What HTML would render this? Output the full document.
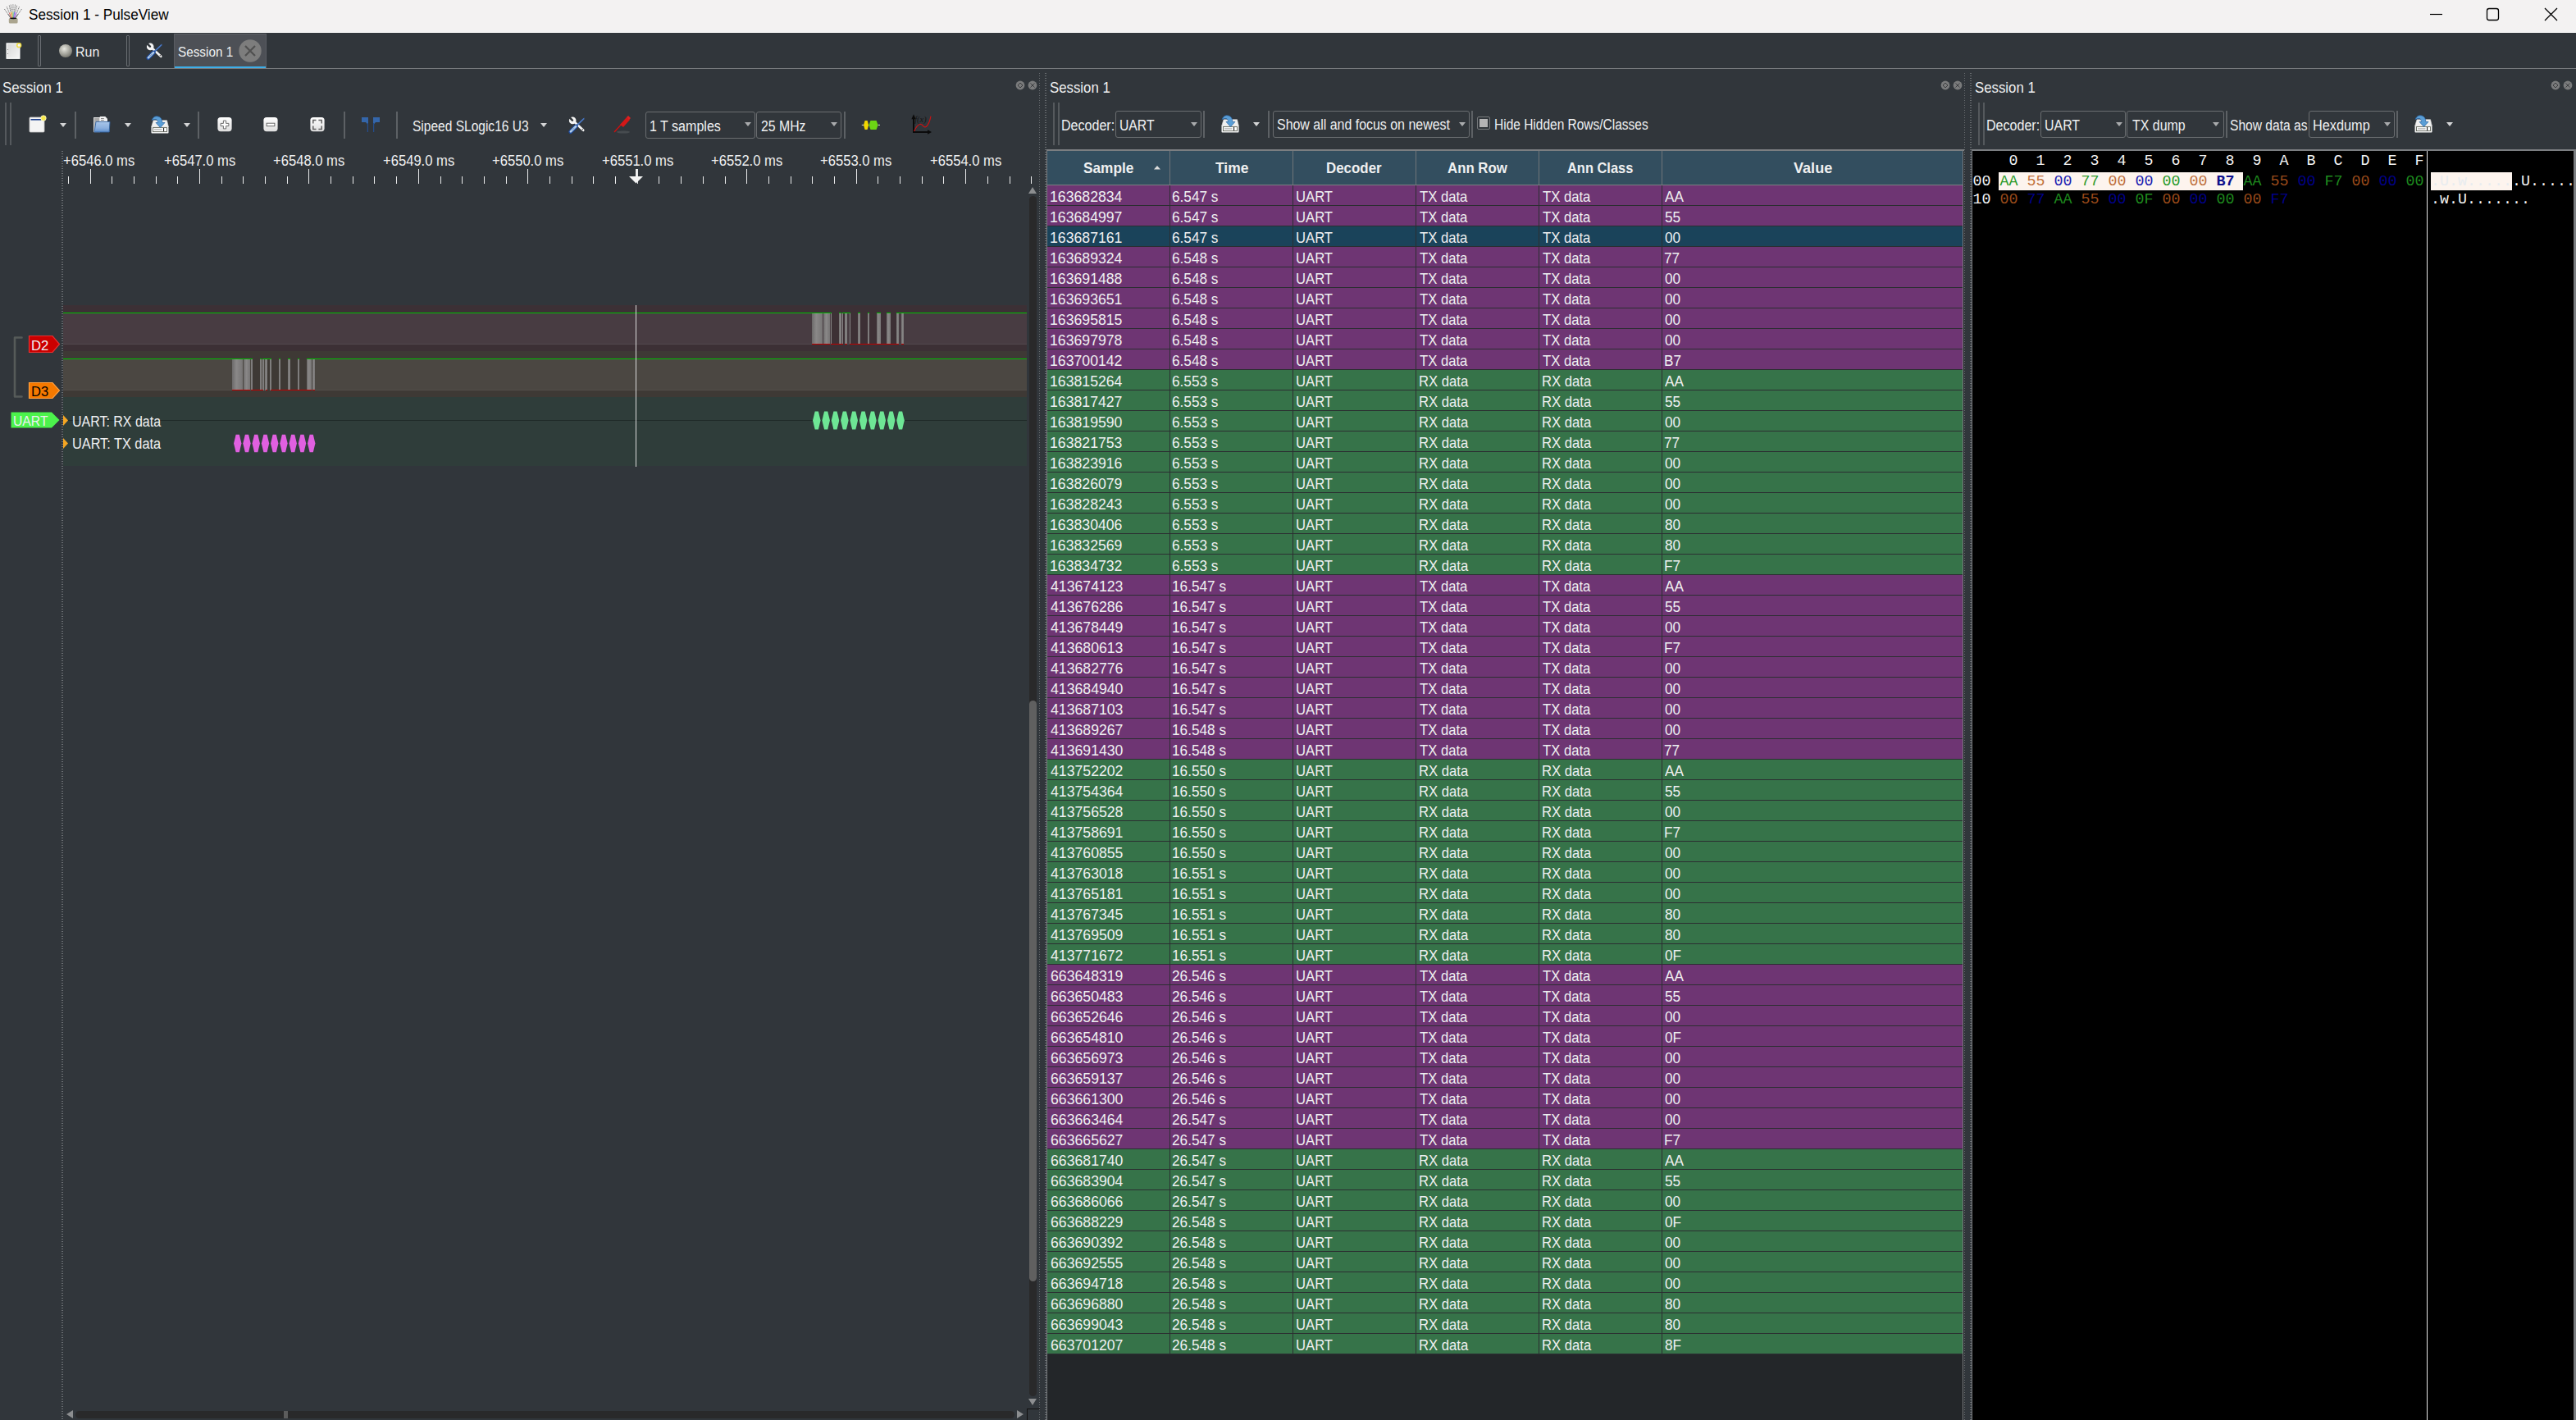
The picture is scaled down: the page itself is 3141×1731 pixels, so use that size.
<!DOCTYPE html>
<html><head><meta charset="utf-8"><style>
html,body{margin:0;padding:0;width:3141px;height:1731px;overflow:hidden;background:#31363b}
.b{position:absolute;box-sizing:content-box}
svg.b{overflow:visible}
.t{position:absolute;white-space:pre;line-height:1;transform-origin:0 0;font-family:"Liberation Sans",sans-serif}
</style></head><body>
<div class="b" style="left:0px;top:0px;width:3141px;height:40px;background:#f3f2f2;"></div>
<div class="b" style="left:0px;top:39px;width:3141px;height:1px;background:#fbfbfb;"></div>
<svg class="b" style="left:0px;top:0px;" width="32" height="32" viewBox="0 0 32 32"><line x1="5.4" y1="11" x2="9.69" y2="17.05" stroke="#6a6a6a" stroke-width="0.9" stroke-dasharray="1.2 0.6"/><line x1="9.69" y1="17.05" x2="13.20" y2="22" stroke="#555" stroke-width="1"/><line x1="8.2" y1="8.2" x2="11.33" y2="15.79" stroke="#6a6a6a" stroke-width="0.9" stroke-dasharray="1.2 0.6"/><line x1="11.33" y1="15.79" x2="13.90" y2="22" stroke="#d86060" stroke-width="1"/><line x1="11.3" y1="6.5" x2="13.12" y2="15.02" stroke="#6a6a6a" stroke-width="0.9" stroke-dasharray="1.2 0.6"/><line x1="13.12" y1="15.02" x2="14.60" y2="22" stroke="#e88040" stroke-width="1"/><line x1="13.2" y1="5.6" x2="14.35" y2="14.62" stroke="#6a6a6a" stroke-width="0.9" stroke-dasharray="1.2 0.6"/><line x1="14.35" y1="14.62" x2="15.30" y2="22" stroke="#e8d070" stroke-width="1"/><line x1="15.9" y1="5.4" x2="15.96" y2="14.53" stroke="#6a6a6a" stroke-width="0.9" stroke-dasharray="1.2 0.6"/><line x1="15.96" y1="14.53" x2="16.00" y2="22" stroke="#60b040" stroke-width="1"/><line x1="18.5" y1="5.6" x2="17.51" y2="14.62" stroke="#6a6a6a" stroke-width="0.9" stroke-dasharray="1.2 0.6"/><line x1="17.51" y1="14.62" x2="16.70" y2="22" stroke="#5080e0" stroke-width="1"/><line x1="20.6" y1="6.8" x2="18.84" y2="15.16" stroke="#6a6a6a" stroke-width="0.9" stroke-dasharray="1.2 0.6"/><line x1="18.84" y1="15.16" x2="17.40" y2="22" stroke="#c050e0" stroke-width="1"/><line x1="23.5" y1="8.2" x2="20.53" y2="15.79" stroke="#6a6a6a" stroke-width="0.9" stroke-dasharray="1.2 0.6"/><line x1="20.53" y1="15.79" x2="18.10" y2="22" stroke="#9090c0" stroke-width="1"/><line x1="26.5" y1="11" x2="22.26" y2="17.05" stroke="#6a6a6a" stroke-width="0.9" stroke-dasharray="1.2 0.6"/><line x1="22.26" y1="17.05" x2="18.80" y2="22" stroke="#555" stroke-width="1"/><rect x="10.8" y="22" width="10.8" height="6.6" rx="1.6" fill="#aba58f"/><ellipse cx="16.2" cy="22.3" rx="4" ry="0.9" fill="#111"/></svg>
<div class="t" style="left:35.33px;top:9.20px;font-size:18.90px;font-family:'Liberation Sans',sans-serif;color:#000000;transform:scaleX(0.9095);">Session 1 - PulseView</div>
<svg class="b" style="left:2955px;top:8px;" width="32" height="20" viewBox="0 0 32 20"><line x1="8" y1="9.5" x2="23" y2="9.5" stroke="#000" stroke-width="1.2"/></svg>
<svg class="b" style="left:3026px;top:4px;" width="28" height="28" viewBox="0 0 28 28"><rect x="6.5" y="6.5" width="14" height="14" rx="2.5" fill="none" stroke="#000" stroke-width="1.3"/></svg>
<svg class="b" style="left:3097px;top:4px;" width="28" height="28" viewBox="0 0 28 28"><path d="M6 6 L21 21 M21 6 L6 21" stroke="#000" stroke-width="1.3"/></svg>
<div class="b" style="left:0px;top:40px;width:3141px;height:1691px;background:#31363b;"></div>
<div class="b" style="left:0px;top:83px;width:3141px;height:1px;background:#76797c;"></div>
<svg class="b" style="left:6px;top:51px;" width="24" height="24" viewBox="0 0 24 24"><defs><linearGradient id="pg" x1="0" y1="0" x2="1" y2="1"><stop offset="0" stop-color="#d8d8d8"/><stop offset="1" stop-color="#f4f4f4"/></linearGradient></defs><rect x="1.5" y="1.3" width="17" height="19.6" fill="#fdfdfd"/><rect x="2.9" y="2.6" width="14.3" height="17" fill="url(#pg)"/><circle cx="3.5" cy="9.5" r="0.6" fill="#777"/><circle cx="3.5" cy="14.5" r="0.6" fill="#777"/><circle cx="17.2" cy="4.2" r="2.4" fill="#f6f4ff" stroke="#eedc40" stroke-width="1.5"/></svg>
<div class="b" style="left:46px;top:43px;width:2px;height:36px;border:1px solid #6a6e72;border-radius:1px"></div>
<svg class="b" style="left:71px;top:53px;" width="18" height="18" viewBox="0 0 18 18"><defs><radialGradient id="rg" cx="40%" cy="35%" r="65%"><stop offset="0" stop-color="#e8e8e0"/><stop offset="1" stop-color="#7c7c74"/></radialGradient></defs><circle cx="9" cy="9" r="8" fill="url(#rg)"/></svg>
<div class="t" style="left:92.22px;top:55.40px;font-size:16.30px;font-family:'Liberation Sans',sans-serif;color:#eff0f1;transform:scaleX(0.9801);">Run</div>
<div class="b" style="left:154px;top:43px;width:2px;height:36px;border:1px solid #6a6e72;border-radius:1px"></div>
<svg class="b" style="left:172px;top:46px;" width="30" height="30" viewBox="0 0 30 30"><path d="M13.5 12.8 L24.2 22.8" stroke="#f4f4f4" stroke-width="2.7" stroke-linecap="round"/><circle cx="11.2" cy="10.9" r="4.3" fill="#f4f4f4"/><path d="M10.9 10.6 L7.2 6.9" stroke="#31363b" stroke-width="2.6" stroke-linecap="round"/><circle cx="23.3" cy="21.8" r="0.7" fill="#444"/><path d="M25.2 8.4 L16.2 17" stroke="#2a5cae" stroke-width="1.9"/><path d="M25.2 8.4 L16.2 17" stroke="#dde6f4" stroke-width="0.7" stroke-dasharray="0.8 0.8"/><path d="M15.3 18 L8.7 24.6" stroke="#1f4c9e" stroke-width="4.8" stroke-linecap="round"/><path d="M15.1 18.2 L8.9 24.4" stroke="#b4d0ec" stroke-width="2.6" stroke-linecap="round"/><path d="M13.5 19.8 L10 23.3" stroke="#5070a0" stroke-width="0.7"/></svg>
<div class="b" style="left:212px;top:41px;width:113px;height:42px;background:#4d5056;"></div>
<div class="b" style="left:212px;top:41px;width:113px;height:1px;background:#5f6268;"></div>
<div class="b" style="left:212px;top:41px;width:1px;height:42px;background:#5a5d63;"></div>
<div class="b" style="left:324px;top:41px;width:1px;height:42px;background:#5a5d63;"></div>
<div class="b" style="left:213px;top:81px;width:111px;height:2px;background:#3daee9;"></div>
<div class="t" style="left:217.31px;top:54.89px;font-size:16.20px;font-family:'Liberation Sans',sans-serif;color:#eff0f1;transform:scaleX(0.9446);">Session 1</div>
<svg class="b" style="left:291px;top:48px;" width="28" height="28" viewBox="0 0 28 28"><circle cx="14" cy="14" r="13.7" fill="#7d7d7d"/><path d="M8 8 L20 20 M20 8 L8 20" stroke="#505050" stroke-width="2.2"/></svg>
<div class="t" style="left:2.74px;top:98.26px;font-size:18.60px;font-family:'Liberation Sans',sans-serif;color:#eff0f1;transform:scaleX(0.9027);">Session 1</div>
<div class="t" style="left:1280.04px;top:98.26px;font-size:18.60px;font-family:'Liberation Sans',sans-serif;color:#eff0f1;transform:scaleX(0.9027);">Session 1</div>
<div class="t" style="left:2407.84px;top:98.26px;font-size:18.60px;font-family:'Liberation Sans',sans-serif;color:#eff0f1;transform:scaleX(0.9027);">Session 1</div>
<svg class="b" style="left:1237.9px;top:98px;" width="12" height="12" viewBox="0 0 12 12"><circle cx="6" cy="6" r="5.4" fill="#7a7b7c"/><path d="M6 3 L9 6 L6 9 L3 6 Z" fill="none" stroke="#3c3e40" stroke-width="1"/></svg>
<svg class="b" style="left:1253px;top:98px;" width="12" height="12" viewBox="0 0 12 12"><circle cx="6" cy="6" r="5.4" fill="#7a7b7c"/><path d="M3.5 3.5 L8.5 8.5 M8.5 3.5 L3.5 8.5" stroke="#3c3e40" stroke-width="1"/></svg>
<svg class="b" style="left:2365.8px;top:98px;" width="12" height="12" viewBox="0 0 12 12"><circle cx="6" cy="6" r="5.4" fill="#7a7b7c"/><path d="M6 3 L9 6 L6 9 L3 6 Z" fill="none" stroke="#3c3e40" stroke-width="1"/></svg>
<svg class="b" style="left:2381px;top:98px;" width="12" height="12" viewBox="0 0 12 12"><circle cx="6" cy="6" r="5.4" fill="#7a7b7c"/><path d="M3.5 3.5 L8.5 8.5 M8.5 3.5 L3.5 8.5" stroke="#3c3e40" stroke-width="1"/></svg>
<svg class="b" style="left:3110px;top:98px;" width="12" height="12" viewBox="0 0 12 12"><circle cx="6" cy="6" r="5.4" fill="#7a7b7c"/><path d="M6 3 L9 6 L6 9 L3 6 Z" fill="none" stroke="#3c3e40" stroke-width="1"/></svg>
<svg class="b" style="left:3125px;top:98px;" width="12" height="12" viewBox="0 0 12 12"><circle cx="6" cy="6" r="5.4" fill="#7a7b7c"/><path d="M3.5 3.5 L8.5 8.5 M8.5 3.5 L3.5 8.5" stroke="#3c3e40" stroke-width="1"/></svg>
<div class="b" style="left:1267px;top:89px;width:1px;height:1642px;background:repeating-linear-gradient(to bottom,#686c70 0,#686c70 1px,transparent 1px,transparent 3px)"></div>
<div class="b" style="left:1274px;top:89px;width:2px;height:1642px;background:repeating-linear-gradient(to bottom,#686c70 0,#686c70 1px,transparent 1px,transparent 3px)"></div>
<div class="b" style="left:2395px;top:89px;width:1px;height:1642px;background:repeating-linear-gradient(to bottom,#686c70 0,#686c70 1px,transparent 1px,transparent 3px)"></div>
<div class="b" style="left:2402px;top:89px;width:2px;height:1642px;background:repeating-linear-gradient(to bottom,#686c70 0,#686c70 1px,transparent 1px,transparent 3px)"></div>
<div class="b" style="left:6px;top:125px;width:2px;height:52px;background:#55595d;"></div>
<div class="b" style="left:12px;top:125px;width:2px;height:52px;background:#55595d;"></div>
<svg class="b" style="left:35px;top:140px;" width="22" height="22" viewBox="0 0 22 22"><rect x="1" y="3" width="18" height="18" rx="1" fill="#f4f4f4" stroke="#c8c8c8" stroke-width="0.8"/><rect x="2.5" y="5" width="13" height="1.6" fill="#1c3f8c"/><circle cx="18" cy="4" r="3.2" fill="#f7e84a" stroke="#fffbd0" stroke-width="0.8"/></svg>
<svg class="b" style="left:73.3px;top:150.0px;" width="8" height="5" viewBox="0 0 8 5"><path d="M0 0 L8 0 L4.0 5 Z" fill="#d4d5d6"/></svg>
<div class="b" style="left:91px;top:136px;width:2px;height:33px;background:#5d6165;"></div>
<svg class="b" style="left:110px;top:136px;" width="30" height="30" viewBox="0 0 30 30"><defs><linearGradient id="fg" x1="0" y1="0" x2="0" y2="1"><stop offset="0" stop-color="#a9c6ea"/><stop offset="0.6" stop-color="#8cb0de"/><stop offset="1" stop-color="#5f8fcc"/></linearGradient></defs><rect x="4.6" y="7.5" width="7" height="17.2" fill="#a8a8a8" stroke="#ececec" stroke-width="0.9"/><path d="M11.8 6 H18.3 L21 8.7 V12.6 H11.8 Z" fill="#f2f2f2"/><rect x="13" y="8" width="3.8" height="0.9" fill="#7a7a7a"/><rect x="13" y="10" width="3.8" height="0.9" fill="#7a7a7a"/><path d="M7 12.4 H24 L23.2 25 H5 Z" fill="url(#fg)" stroke="#3465a4" stroke-width="0.9"/></svg>
<svg class="b" style="left:152.3px;top:150.0px;" width="8" height="5" viewBox="0 0 8 5"><path d="M0 0 L8 0 L4.0 5 Z" fill="#d4d5d6"/></svg>
<svg class="b" style="left:180px;top:136px;" width="30" height="30" viewBox="0 0 30 30"><path d="M7 10.7 H23.5 L25.5 19 H4.5 Z" fill="#f0f0f0" stroke="#d8d8d8" stroke-width="0.6"/><rect x="4.5" y="19" width="21" height="7.5" rx="0.8" fill="#f6f6f6"/><rect x="6.5" y="19.6" width="17" height="5" fill="#fff" stroke="#62665c" stroke-width="0.9"/><rect x="8" y="21" width="9.5" height="1.8" fill="#c4c4c4"/><rect x="19.1" y="20" width="1" height="4.2" fill="#111"/><path d="M5 10.5 Q7.5 4.5 13 6 Q17.8 7.5 17.8 13.5 H21 L15.5 19.5 L10 13.5 H12.6 Q12.6 9.8 9.8 9.6 Q7.3 9.5 5 10.5 Z" fill="#5a9ed6" stroke="#2a64a4" stroke-width="0.7"/></svg>
<svg class="b" style="left:223.5px;top:150.0px;" width="8" height="5" viewBox="0 0 8 5"><path d="M0 0 L8 0 L4.0 5 Z" fill="#d4d5d6"/></svg>
<div class="b" style="left:241px;top:136px;width:2px;height:33px;background:#5d6165;"></div>
<svg class="b" style="left:265px;top:143px;" width="18" height="18" viewBox="0 0 18 18"><defs><linearGradient id="zg" x1="0" y1="0" x2="0" y2="1"><stop offset="0" stop-color="#ffffff"/><stop offset="1" stop-color="#dedede"/></linearGradient></defs><rect x="0.4" y="0" width="17.2" height="17.2" rx="3.6" fill="url(#zg)"/><path d="M7.4 4.1 H10.6 V7.4 H13.9 V10.6 H10.6 V13.9 H7.4 V10.6 H4.1 V7.4 H7.4 Z" fill="#fff" stroke="#5c5c5c" stroke-width="0.9"/></svg>
<svg class="b" style="left:321px;top:143px;" width="18" height="18" viewBox="0 0 18 18"><defs><linearGradient id="zg" x1="0" y1="0" x2="0" y2="1"><stop offset="0" stop-color="#ffffff"/><stop offset="1" stop-color="#dedede"/></linearGradient></defs><rect x="0.4" y="0" width="17.2" height="17.2" rx="3.6" fill="url(#zg)"/><rect x="4.1" y="7.2" width="9.8" height="3.5" fill="#fff" stroke="#5c5c5c" stroke-width="0.9"/></svg>
<svg class="b" style="left:378px;top:143px;" width="18" height="18" viewBox="0 0 18 18"><defs><linearGradient id="zg" x1="0" y1="0" x2="0" y2="1"><stop offset="0" stop-color="#ffffff"/><stop offset="1" stop-color="#dedede"/></linearGradient></defs><rect x="0.4" y="0" width="17.2" height="17.2" rx="3.6" fill="url(#zg)"/><path d="M3.8 7.5 V3.6 H7.5 M10.4 3.6 H14.2 V7.5 M14.2 10.6 V14.4 H10.4 M7.5 14.4 H3.8 V10.6" fill="none" stroke="#606060" stroke-width="1.5"/></svg>
<div class="b" style="left:419px;top:136px;width:2px;height:33px;background:#5d6165;"></div>
<svg class="b" style="left:436px;top:138px;" width="32" height="28" viewBox="0 0 32 28"><path d="M5 5 H13 V23 H11.9 V13.3 L10 11 H5 Z" fill="#3466aa"/><path d="M27 5 H19 V23 H20.1 V13.3 L22 11 H27 Z" fill="#3466aa"/><rect x="11.9" y="12" width="1.1" height="11" fill="#234d8f"/><rect x="19" y="12" width="1.1" height="11" fill="#234d8f"/></svg>
<div class="b" style="left:483px;top:136px;width:2px;height:33px;background:#5d6165;"></div>
<div class="t" style="left:502.60px;top:144.76px;font-size:18.00px;font-family:'Liberation Sans',sans-serif;color:#eff0f1;transform:scaleX(0.8626);">Sipeed SLogic16 U3</div>
<svg class="b" style="left:659.3px;top:149.7px;" width="8" height="5" viewBox="0 0 8 5"><path d="M0 0 L8 0 L4.0 5 Z" fill="#d4d5d6"/></svg>
<svg class="b" style="left:687px;top:136px;" width="30" height="30" viewBox="0 0 30 30"><path d="M13.5 12.8 L24.2 22.8" stroke="#f4f4f4" stroke-width="2.7" stroke-linecap="round"/><circle cx="11.2" cy="10.9" r="4.3" fill="#f4f4f4"/><path d="M10.9 10.6 L7.2 6.9" stroke="#31363b" stroke-width="2.6" stroke-linecap="round"/><circle cx="23.3" cy="21.8" r="0.7" fill="#444"/><path d="M25.2 8.4 L16.2 17" stroke="#2a5cae" stroke-width="1.9"/><path d="M25.2 8.4 L16.2 17" stroke="#dde6f4" stroke-width="0.7" stroke-dasharray="0.8 0.8"/><path d="M15.3 18 L8.7 24.6" stroke="#1f4c9e" stroke-width="4.8" stroke-linecap="round"/><path d="M15.1 18.2 L8.9 24.4" stroke="#b4d0ec" stroke-width="2.6" stroke-linecap="round"/><path d="M13.5 19.8 L10 23.3" stroke="#5070a0" stroke-width="0.7"/></svg>
<svg class="b" style="left:747px;top:140px;" width="22" height="24" viewBox="0 0 22 24"><ellipse cx="13" cy="21" rx="8" ry="1.6" fill="#555a5e" opacity="0.6"/><path d="M2 21 L13 9" stroke="#cc1010" stroke-width="1.4"/><path d="M9 12 L17 3 L21 6 L13 15 Z" fill="#d41818"/><path d="M17 3 L19 1 L22 4 L20 6 Z" fill="#e02020"/></svg>
<div class="b" style="left:787px;top:136px;width:132px;height:31px;border:1px solid #6a6d70;border-radius:3px"></div>
<div class="t" style="left:792.40px;top:144.86px;font-size:18.00px;font-family:'Liberation Sans',sans-serif;color:#eff0f1;transform:scaleX(0.8920);">1 T samples</div>
<svg class="b" style="left:908.4px;top:149.0px;" width="8" height="5" viewBox="0 0 8 5"><path d="M0 0 L8 0 L4.0 5 Z" fill="#a9abad"/></svg>
<div class="b" style="left:922px;top:136px;width:102px;height:31px;border:1px solid #6a6d70;border-radius:3px"></div>
<div class="t" style="left:927.51px;top:144.86px;font-size:18.00px;font-family:'Liberation Sans',sans-serif;color:#eff0f1;transform:scaleX(0.8786);">25 MHz</div>
<svg class="b" style="left:1013.0px;top:149.0px;" width="8" height="5" viewBox="0 0 8 5"><path d="M0 0 L8 0 L4.0 5 Z" fill="#a9abad"/></svg>
<div class="b" style="left:1029px;top:136px;width:2px;height:33px;background:#5d6165;"></div>
<svg class="b" style="left:1049px;top:145px;" width="26" height="15" viewBox="0 0 26 15"><path d="M1.8 7.4 H4 M21.6 7.4 H24" stroke="#d8d8d8" stroke-width="1"/><path d="M4 7.4 L5.6 1.9 H8.6 L10.2 7.4 L8.6 13.1 H5.6 Z" fill="#f2d600"/><path d="M10.5 7.4 L12.5 1.9 H19.6 L21.6 7.4 L19.6 13.1 H12.5 Z" fill="#6cd414"/></svg>
<svg class="b" style="left:1110px;top:139px;" width="28" height="26" viewBox="0 0 28 26"><path d="M4 3 V22.6" stroke="#0a0a0a" stroke-width="1.9"/><path d="M1.4 6.2 L4 0.3 L6.6 6.2 Z" fill="#0a0a0a"/><path d="M3.1 22 H22" stroke="#0a0a0a" stroke-width="1.9"/><path d="M21 19.3 L26 22 L21 24.7 Z" fill="#0a0a0a"/><path d="M4.6 21 Q8 13 12.3 12.2 Q14 12.3 16 14.8 Q17.5 16.5 19.2 15.6 Q23.2 12 25 2.6" fill="none" stroke="#d41010" stroke-width="1.1"/><text x="5.2" y="9.6" font-family="Liberation Serif" font-style="italic" font-size="10.5" fill="#151515">f(x)</text></svg>
<div class="t" style="left:77.37px;top:188.29px;font-size:17.50px;font-family:'Liberation Sans',sans-serif;color:#eff0f1;transform:scaleX(0.9483);">+6546.0 ms</div>
<div class="t" style="left:199.73px;top:188.29px;font-size:17.50px;font-family:'Liberation Sans',sans-serif;color:#eff0f1;transform:scaleX(0.9483);">+6547.0 ms</div>
<div class="t" style="left:333.19px;top:188.29px;font-size:17.50px;font-family:'Liberation Sans',sans-serif;color:#eff0f1;transform:scaleX(0.9483);">+6548.0 ms</div>
<div class="t" style="left:466.65px;top:188.29px;font-size:17.50px;font-family:'Liberation Sans',sans-serif;color:#eff0f1;transform:scaleX(0.9483);">+6549.0 ms</div>
<div class="t" style="left:600.11px;top:188.29px;font-size:17.50px;font-family:'Liberation Sans',sans-serif;color:#eff0f1;transform:scaleX(0.9483);">+6550.0 ms</div>
<div class="t" style="left:733.57px;top:188.29px;font-size:17.50px;font-family:'Liberation Sans',sans-serif;color:#eff0f1;transform:scaleX(0.9483);">+6551.0 ms</div>
<div class="t" style="left:867.03px;top:188.29px;font-size:17.50px;font-family:'Liberation Sans',sans-serif;color:#eff0f1;transform:scaleX(0.9483);">+6552.0 ms</div>
<div class="t" style="left:1000.49px;top:188.29px;font-size:17.50px;font-family:'Liberation Sans',sans-serif;color:#eff0f1;transform:scaleX(0.9483);">+6553.0 ms</div>
<div class="t" style="left:1133.95px;top:188.29px;font-size:17.50px;font-family:'Liberation Sans',sans-serif;color:#eff0f1;transform:scaleX(0.9483);">+6554.0 ms</div>
<div class="b" style="left:82.5px;top:215px;width:1.5px;height:9px;background:#e9eaeb;"></div>
<div class="b" style="left:109.5px;top:206px;width:1.5px;height:18px;background:#e9eaeb;"></div>
<div class="b" style="left:135.5px;top:215px;width:1.5px;height:9px;background:#e9eaeb;"></div>
<div class="b" style="left:162.5px;top:215px;width:1.5px;height:9px;background:#e9eaeb;"></div>
<div class="b" style="left:189.5px;top:215px;width:1.5px;height:9px;background:#e9eaeb;"></div>
<div class="b" style="left:215.5px;top:215px;width:1.5px;height:9px;background:#e9eaeb;"></div>
<div class="b" style="left:242.5px;top:206px;width:1.5px;height:18px;background:#e9eaeb;"></div>
<div class="b" style="left:269.5px;top:215px;width:1.5px;height:9px;background:#e9eaeb;"></div>
<div class="b" style="left:295.5px;top:215px;width:1.5px;height:9px;background:#e9eaeb;"></div>
<div class="b" style="left:322.5px;top:215px;width:1.5px;height:9px;background:#e9eaeb;"></div>
<div class="b" style="left:349.5px;top:215px;width:1.5px;height:9px;background:#e9eaeb;"></div>
<div class="b" style="left:375.5px;top:206px;width:1.5px;height:18px;background:#e9eaeb;"></div>
<div class="b" style="left:402.5px;top:215px;width:1.5px;height:9px;background:#e9eaeb;"></div>
<div class="b" style="left:429.5px;top:215px;width:1.5px;height:9px;background:#e9eaeb;"></div>
<div class="b" style="left:455.5px;top:215px;width:1.5px;height:9px;background:#e9eaeb;"></div>
<div class="b" style="left:482.5px;top:215px;width:1.5px;height:9px;background:#e9eaeb;"></div>
<div class="b" style="left:509.5px;top:206px;width:1.5px;height:18px;background:#e9eaeb;"></div>
<div class="b" style="left:536.5px;top:215px;width:1.5px;height:9px;background:#e9eaeb;"></div>
<div class="b" style="left:562.5px;top:215px;width:1.5px;height:9px;background:#e9eaeb;"></div>
<div class="b" style="left:589.5px;top:215px;width:1.5px;height:9px;background:#e9eaeb;"></div>
<div class="b" style="left:616.5px;top:215px;width:1.5px;height:9px;background:#e9eaeb;"></div>
<div class="b" style="left:642.5px;top:206px;width:1.5px;height:18px;background:#e9eaeb;"></div>
<div class="b" style="left:669.5px;top:215px;width:1.5px;height:9px;background:#e9eaeb;"></div>
<div class="b" style="left:696.5px;top:215px;width:1.5px;height:9px;background:#e9eaeb;"></div>
<div class="b" style="left:722.5px;top:215px;width:1.5px;height:9px;background:#e9eaeb;"></div>
<div class="b" style="left:749.5px;top:215px;width:1.5px;height:9px;background:#e9eaeb;"></div>
<div class="b" style="left:776.5px;top:206px;width:1.5px;height:18px;background:#e9eaeb;"></div>
<div class="b" style="left:802.5px;top:215px;width:1.5px;height:9px;background:#e9eaeb;"></div>
<div class="b" style="left:829.5px;top:215px;width:1.5px;height:9px;background:#e9eaeb;"></div>
<div class="b" style="left:856.5px;top:215px;width:1.5px;height:9px;background:#e9eaeb;"></div>
<div class="b" style="left:883.5px;top:215px;width:1.5px;height:9px;background:#e9eaeb;"></div>
<div class="b" style="left:909.5px;top:206px;width:1.5px;height:18px;background:#e9eaeb;"></div>
<div class="b" style="left:936.5px;top:215px;width:1.5px;height:9px;background:#e9eaeb;"></div>
<div class="b" style="left:963.5px;top:215px;width:1.5px;height:9px;background:#e9eaeb;"></div>
<div class="b" style="left:989.5px;top:215px;width:1.5px;height:9px;background:#e9eaeb;"></div>
<div class="b" style="left:1016.5px;top:215px;width:1.5px;height:9px;background:#e9eaeb;"></div>
<div class="b" style="left:1043.5px;top:206px;width:1.5px;height:18px;background:#e9eaeb;"></div>
<div class="b" style="left:1069.5px;top:215px;width:1.5px;height:9px;background:#e9eaeb;"></div>
<div class="b" style="left:1096.5px;top:215px;width:1.5px;height:9px;background:#e9eaeb;"></div>
<div class="b" style="left:1123.5px;top:215px;width:1.5px;height:9px;background:#e9eaeb;"></div>
<div class="b" style="left:1149.5px;top:215px;width:1.5px;height:9px;background:#e9eaeb;"></div>
<div class="b" style="left:1176.5px;top:206px;width:1.5px;height:18px;background:#e9eaeb;"></div>
<div class="b" style="left:1203.5px;top:215px;width:1.5px;height:9px;background:#e9eaeb;"></div>
<div class="b" style="left:1230.5px;top:215px;width:1.5px;height:9px;background:#e9eaeb;"></div>
<div class="b" style="left:1256.5px;top:215px;width:1.5px;height:9px;background:#e9eaeb;"></div>
<div class="b" style="left:775px;top:206px;width:1.5px;height:10px;background:#f0f0f0;"></div>
<svg class="b" style="left:767px;top:215px;" width="17" height="9" viewBox="0 0 17 9"><path d="M0 0 L17 0 L8.5 8.5 Z" fill="#f4f4f4"/></svg>
<div class="b" style="left:75px;top:184px;width:2px;height:1547px;background:repeating-linear-gradient(to bottom,#6b6f73 0,#6b6f73 1px,transparent 1px,transparent 3px)"></div>
<div class="b" style="left:77px;top:372px;width:1175px;height:56px;background:#3c3035;"></div>
<div class="b" style="left:77px;top:382px;width:1175px;height:38px;background:#483c42;"></div>
<div class="b" style="left:77px;top:419px;width:1175px;height:1px;background:#51474d;"></div>
<div class="b" style="left:77px;top:381px;width:1175px;height:1.1px;background:#00c000;"></div>
<div class="b" style="left:77px;top:428px;width:1175px;height:56px;background:#3e3935;"></div>
<div class="b" style="left:77px;top:438px;width:1175px;height:38px;background:#4b4742;"></div>
<div class="b" style="left:77px;top:475px;width:1175px;height:1px;background:#534e49;"></div>
<div class="b" style="left:77px;top:437px;width:1175px;height:1.1px;background:#00c000;"></div>
<div class="b" style="left:989.8px;top:381px;width:112.20000000000005px;height:1.1px;background:#3d3035;"></div>
<div class="b" style="left:1014.2px;top:382px;width:8.699999999999932px;height:38px;background:#3d3035;"></div>
<div class="b" style="left:1028px;top:382px;width:2px;height:38px;background:#3d3035;"></div>
<div class="b" style="left:1037.4px;top:382px;width:8.599999999999909px;height:38px;background:#3d3035;"></div>
<div class="b" style="left:1049px;top:382px;width:9px;height:38px;background:#3d3035;"></div>
<div class="b" style="left:1060px;top:382px;width:9px;height:38px;background:#3d3035;"></div>
<div class="b" style="left:1074px;top:382px;width:7px;height:38px;background:#3d3035;"></div>
<div class="b" style="left:1086px;top:382px;width:6.5px;height:38px;background:#3d3035;"></div>
<div class="b" style="left:989.8px;top:382px;width:12.8px;height:38px;background:linear-gradient(to right,#6c6a6a,#8a8888 40%,#777575)"></div>
<div class="b" style="left:1003.8px;top:382px;width:8.3px;height:38px;background:linear-gradient(to right,#6c6a6a,#8a8888 40%,#777575)"></div>
<div class="b" style="left:1012.7px;top:382px;width:1.5px;height:38px;background:linear-gradient(to right,#6c6a6a,#8a8888 40%,#777575)"></div>
<div class="b" style="left:1022.9px;top:382px;width:3.0px;height:38px;background:linear-gradient(to right,#6c6a6a,#8a8888 40%,#777575)"></div>
<div class="b" style="left:1027.0px;top:382px;width:1.0px;height:38px;background:linear-gradient(to right,#6c6a6a,#8a8888 40%,#777575)"></div>
<div class="b" style="left:1030.0px;top:382px;width:3.0px;height:38px;background:linear-gradient(to right,#6c6a6a,#8a8888 40%,#777575)"></div>
<div class="b" style="left:1036.0px;top:382px;width:1.4px;height:38px;background:linear-gradient(to right,#6c6a6a,#8a8888 40%,#777575)"></div>
<div class="b" style="left:1046.0px;top:382px;width:3.0px;height:38px;background:linear-gradient(to right,#6c6a6a,#8a8888 40%,#777575)"></div>
<div class="b" style="left:1058.0px;top:382px;width:2.0px;height:38px;background:linear-gradient(to right,#6c6a6a,#8a8888 40%,#777575)"></div>
<div class="b" style="left:1069.0px;top:382px;width:5.0px;height:38px;background:linear-gradient(to right,#6c6a6a,#8a8888 40%,#777575)"></div>
<div class="b" style="left:1081.0px;top:382px;width:5.0px;height:38px;background:linear-gradient(to right,#6c6a6a,#8a8888 40%,#777575)"></div>
<div class="b" style="left:1092.5px;top:382px;width:3.5px;height:38px;background:linear-gradient(to right,#6c6a6a,#8a8888 40%,#777575)"></div>
<div class="b" style="left:1099.0px;top:382px;width:3.0px;height:38px;background:linear-gradient(to right,#6c6a6a,#8a8888 40%,#777575)"></div>
<div class="b" style="left:989.8px;top:381px;width:24.40000000000009px;height:1.1px;background:#00c000;"></div>
<div class="b" style="left:1023px;top:381px;width:2.599999999999909px;height:1.1px;background:#00c000;"></div>
<div class="b" style="left:1027px;top:381px;width:10px;height:1.1px;background:#00c000;"></div>
<div class="b" style="left:1046px;top:381px;width:3px;height:1.1px;background:#00c000;"></div>
<div class="b" style="left:1058px;top:381px;width:2px;height:1.1px;background:#00c000;"></div>
<div class="b" style="left:1069px;top:381px;width:5px;height:1.1px;background:#00c000;"></div>
<div class="b" style="left:1081px;top:381px;width:5px;height:1.1px;background:#00c000;"></div>
<div class="b" style="left:1092.5px;top:381px;width:9.5px;height:1.1px;background:#00c000;"></div>
<div class="b" style="left:989.8px;top:419px;width:22.100000000000023px;height:1.1px;background:#c00000;"></div>
<div class="b" style="left:1013px;top:419px;width:15px;height:1.1px;background:#c00000;"></div>
<div class="b" style="left:1030px;top:419px;width:3px;height:1.1px;background:#c00000;"></div>
<div class="b" style="left:1036px;top:419px;width:60px;height:1.1px;background:#c00000;"></div>
<div class="b" style="left:1099px;top:419px;width:3px;height:1.1px;background:#c00000;"></div>
<div class="b" style="left:282.9px;top:437px;width:101.20000000000005px;height:1.1px;background:#3e3935;"></div>
<div class="b" style="left:307.8px;top:438px;width:9.0px;height:38px;background:#3e3935;"></div>
<div class="b" style="left:326px;top:438px;width:3px;height:38px;background:#3e3935;"></div>
<div class="b" style="left:331px;top:438px;width:8.800000000000011px;height:38px;background:#3e3935;"></div>
<div class="b" style="left:342px;top:438px;width:9px;height:38px;background:#3e3935;"></div>
<div class="b" style="left:354px;top:438px;width:9px;height:38px;background:#3e3935;"></div>
<div class="b" style="left:365px;top:438px;width:9px;height:38px;background:#3e3935;"></div>
<div class="b" style="left:282.9px;top:438px;width:13.1px;height:38px;background:linear-gradient(to right,#6c6a6a,#8a8888 40%,#777575)"></div>
<div class="b" style="left:297.0px;top:438px;width:8.0px;height:38px;background:linear-gradient(to right,#6c6a6a,#8a8888 40%,#777575)"></div>
<div class="b" style="left:305.8px;top:438px;width:2.0px;height:38px;background:linear-gradient(to right,#6c6a6a,#8a8888 40%,#777575)"></div>
<div class="b" style="left:316.8px;top:438px;width:2.4px;height:38px;background:linear-gradient(to right,#6c6a6a,#8a8888 40%,#777575)"></div>
<div class="b" style="left:320.0px;top:438px;width:1.5px;height:38px;background:linear-gradient(to right,#6c6a6a,#8a8888 40%,#777575)"></div>
<div class="b" style="left:323.0px;top:438px;width:3.0px;height:38px;background:linear-gradient(to right,#6c6a6a,#8a8888 40%,#777575)"></div>
<div class="b" style="left:329.0px;top:438px;width:2.0px;height:38px;background:linear-gradient(to right,#6c6a6a,#8a8888 40%,#777575)"></div>
<div class="b" style="left:339.8px;top:438px;width:2.2px;height:38px;background:linear-gradient(to right,#6c6a6a,#8a8888 40%,#777575)"></div>
<div class="b" style="left:351.0px;top:438px;width:3.0px;height:38px;background:linear-gradient(to right,#6c6a6a,#8a8888 40%,#777575)"></div>
<div class="b" style="left:363.0px;top:438px;width:2.0px;height:38px;background:linear-gradient(to right,#6c6a6a,#8a8888 40%,#777575)"></div>
<div class="b" style="left:374.0px;top:438px;width:6.0px;height:38px;background:linear-gradient(to right,#6c6a6a,#8a8888 40%,#777575)"></div>
<div class="b" style="left:381.0px;top:438px;width:3.0px;height:38px;background:linear-gradient(to right,#6c6a6a,#8a8888 40%,#777575)"></div>
<div class="b" style="left:282.9px;top:437px;width:25.200000000000045px;height:1.1px;background:#00c000;"></div>
<div class="b" style="left:316.8px;top:437px;width:2.3999999999999773px;height:1.1px;background:#00c000;"></div>
<div class="b" style="left:320px;top:437px;width:10.800000000000011px;height:1.1px;background:#00c000;"></div>
<div class="b" style="left:339.8px;top:437px;width:2.1999999999999886px;height:1.1px;background:#00c000;"></div>
<div class="b" style="left:351px;top:437px;width:3px;height:1.1px;background:#00c000;"></div>
<div class="b" style="left:363px;top:437px;width:2px;height:1.1px;background:#00c000;"></div>
<div class="b" style="left:374px;top:437px;width:10.100000000000023px;height:1.1px;background:#00c000;"></div>
<div class="b" style="left:282.9px;top:475px;width:22.100000000000023px;height:1.1px;background:#c00000;"></div>
<div class="b" style="left:306px;top:475px;width:15px;height:1.1px;background:#c00000;"></div>
<div class="b" style="left:323.5px;top:475px;width:2.5px;height:1.1px;background:#c00000;"></div>
<div class="b" style="left:329.5px;top:475px;width:50.5px;height:1.1px;background:#c00000;"></div>
<div class="b" style="left:381px;top:475px;width:3px;height:1.1px;background:#c00000;"></div>
<div class="b" style="left:77px;top:484px;width:1175px;height:84px;background:#2f3d3a;"></div>
<div class="b" style="left:83px;top:512px;width:1169px;height:1px;background:#1f2a28;"></div>
<svg class="b" style="left:77px;top:506px;" width="7" height="13" viewBox="0 0 7 13"><path d="M0 0 L6 6.5 L0 13 Z" fill="#f5a623"/></svg>
<svg class="b" style="left:77px;top:534px;" width="7" height="13" viewBox="0 0 7 13"><path d="M0 0 L6 6.5 L0 13 Z" fill="#f5a623"/></svg>
<div class="t" style="left:87.80px;top:504.56px;font-size:18.00px;font-family:'Liberation Sans',sans-serif;color:#eff0f1;transform:scaleX(0.8876);">UART: RX data</div>
<div class="t" style="left:87.78px;top:532.36px;font-size:18.00px;font-family:'Liberation Sans',sans-serif;color:#eff0f1;transform:scaleX(0.9052);">UART: TX data</div>
<svg class="b" style="left:0px;top:0px;pointer-events:none" width="1260" height="600" viewBox="0 0 1260 600"><path d="M991.00 512.6 L993.68 501.6 L997.88 501.6 L1000.56 512.6 L997.88 523.6 L993.68 523.6 Z" fill="#6ee695"/><path d="M1002.36 512.6 L1005.04 501.6 L1009.24 501.6 L1011.92 512.6 L1009.24 523.6 L1005.04 523.6 Z" fill="#6ee695"/><path d="M1013.72 512.6 L1016.40 501.6 L1020.60 501.6 L1023.28 512.6 L1020.60 523.6 L1016.40 523.6 Z" fill="#6ee695"/><path d="M1025.08 512.6 L1027.76 501.6 L1031.96 501.6 L1034.64 512.6 L1031.96 523.6 L1027.76 523.6 Z" fill="#6ee695"/><path d="M1036.44 512.6 L1039.12 501.6 L1043.32 501.6 L1046.00 512.6 L1043.32 523.6 L1039.12 523.6 Z" fill="#6ee695"/><path d="M1047.80 512.6 L1050.48 501.6 L1054.68 501.6 L1057.36 512.6 L1054.68 523.6 L1050.48 523.6 Z" fill="#6ee695"/><path d="M1059.16 512.6 L1061.84 501.6 L1066.04 501.6 L1068.72 512.6 L1066.04 523.6 L1061.84 523.6 Z" fill="#6ee695"/><path d="M1070.52 512.6 L1073.20 501.6 L1077.40 501.6 L1080.08 512.6 L1077.40 523.6 L1073.20 523.6 Z" fill="#6ee695"/><path d="M1081.88 512.6 L1084.56 501.6 L1088.76 501.6 L1091.44 512.6 L1088.76 523.6 L1084.56 523.6 Z" fill="#6ee695"/><path d="M1093.24 512.6 L1095.92 501.6 L1100.12 501.6 L1102.80 512.6 L1100.12 523.6 L1095.92 523.6 Z" fill="#6ee695"/></svg>
<svg class="b" style="left:0px;top:0px;pointer-events:none" width="1260" height="600" viewBox="0 0 1260 600"><path d="M285.00 540.5 L287.65 529.75 L291.80 529.75 L294.45 540.5 L291.80 551.25 L287.65 551.25 Z" fill="#e060e0"/><path d="M296.25 540.5 L298.90 529.75 L303.05 529.75 L305.70 540.5 L303.05 551.25 L298.90 551.25 Z" fill="#e060e0"/><path d="M307.50 540.5 L310.15 529.75 L314.30 529.75 L316.95 540.5 L314.30 551.25 L310.15 551.25 Z" fill="#e060e0"/><path d="M318.75 540.5 L321.40 529.75 L325.55 529.75 L328.20 540.5 L325.55 551.25 L321.40 551.25 Z" fill="#e060e0"/><path d="M330.00 540.5 L332.65 529.75 L336.80 529.75 L339.45 540.5 L336.80 551.25 L332.65 551.25 Z" fill="#e060e0"/><path d="M341.25 540.5 L343.90 529.75 L348.05 529.75 L350.70 540.5 L348.05 551.25 L343.90 551.25 Z" fill="#e060e0"/><path d="M352.50 540.5 L355.15 529.75 L359.30 529.75 L361.95 540.5 L359.30 551.25 L355.15 551.25 Z" fill="#e060e0"/><path d="M363.75 540.5 L366.40 529.75 L370.55 529.75 L373.20 540.5 L370.55 551.25 L366.40 551.25 Z" fill="#e060e0"/><path d="M375.00 540.5 L377.65 529.75 L381.80 529.75 L384.45 540.5 L381.80 551.25 L377.65 551.25 Z" fill="#e060e0"/></svg>
<div class="b" style="left:775px;top:372px;width:1.2px;height:197px;background:#d8d8d8;"></div>
<svg class="b" style="left:34px;top:408px;" width="40" height="23" viewBox="0 0 40 23"><path d="M1.5 1.5 H30 L38.5 11.5 L30 21.5 H1.5 Z" fill="#cc0000" stroke="#e83030" stroke-width="1.2"/></svg>
<div class="t" style="left:37.97px;top:412.63px;font-size:16.50px;font-family:'Liberation Sans',sans-serif;color:#eff0f1;transform:scaleX(1.0110);">D2</div>
<svg class="b" style="left:34px;top:465px;" width="40" height="22" viewBox="0 0 40 22"><path d="M1.5 1.5 H30 L38.5 11 L30 20.5 H1.5 Z" fill="#f57900" stroke="#ffa040" stroke-width="1.2"/></svg>
<div class="t" style="left:37.98px;top:468.53px;font-size:16.50px;font-family:'Liberation Sans',sans-serif;color:#000000;transform:scaleX(1.0022);">D3</div>
<svg class="b" style="left:13px;top:502px;" width="61" height="21" viewBox="0 0 61 21"><path d="M0.5 0.5 H50 L59.5 10 L50 19.5 H0.5 Z" fill="#4cf24c"/></svg>
<div class="t" style="left:16.22px;top:505.33px;font-size:16.50px;font-family:'Liberation Sans',sans-serif;color:#eff0f1;transform:scaleX(0.9520);">UART</div>
<svg class="b" style="left:14px;top:409px;" width="14" height="78" viewBox="0 0 14 78"><path d="M12.5 2.5 H4 V74.5 H12.5" fill="none" stroke="#565b59" stroke-width="2.6" stroke-linejoin="round" stroke-linecap="round"/></svg>
<svg class="b" style="left:1254px;top:228px;" width="10" height="8" viewBox="0 0 10 8"><path d="M0 8 L10 8 L5 0 Z" fill="#8c8e90"/></svg>
<div class="b" style="left:1255px;top:239px;width:9px;height:1463px;background:#29292a;border-radius:4.5px"></div>
<div class="b" style="left:1255px;top:854px;width:9px;height:708px;background:#606060;border-radius:4.5px"></div>
<svg class="b" style="left:1254px;top:1705px;" width="10" height="8" viewBox="0 0 10 8"><path d="M0 0 L10 0 L5 8 Z" fill="#8c8e90"/></svg>
<svg class="b" style="left:81px;top:1719px;" width="8" height="10" viewBox="0 0 8 10"><path d="M8 0 L8 10 L0 5 Z" fill="#8c8e90"/></svg>
<div class="b" style="left:92px;top:1720px;width:1145px;height:9px;background:#29292a;border-radius:4.5px"></div>
<div class="b" style="left:346px;top:1720px;width:5px;height:9px;background:#5c5c5c;"></div>
<svg class="b" style="left:1240px;top:1719px;" width="8" height="10" viewBox="0 0 8 10"><path d="M0 0 L0 10 L8 5 Z" fill="#8c8e90"/></svg>
<div class="b" style="left:1252px;top:1717px;width:15px;height:14px;border-left:1px solid #111;border-top:1px solid #111"></div>
<div class="b" style="left:1283.7px;top:125px;width:2px;height:52px;background:#55595d;"></div>
<div class="b" style="left:1289.7px;top:125px;width:2px;height:52px;background:#55595d;"></div>
<div class="t" style="left:1294.02px;top:143.66px;font-size:18.00px;font-family:'Liberation Sans',sans-serif;color:#eff0f1;transform:scaleX(0.8923);">Decoder:</div>
<div class="b" style="left:1360px;top:135px;width:103px;height:31px;border:1px solid #6a6d70;border-radius:3px"></div>
<div class="t" style="left:1365.12px;top:143.66px;font-size:18.00px;font-family:'Liberation Sans',sans-serif;color:#eff0f1;transform:scaleX(0.8748);">UART</div>
<svg class="b" style="left:1451.5px;top:149.0px;" width="8" height="5" viewBox="0 0 8 5"><path d="M0 0 L8 0 L4.0 5 Z" fill="#a9abad"/></svg>
<div class="b" style="left:1467px;top:135px;width:2px;height:33px;background:#5d6165;"></div>
<svg class="b" style="left:1484.7px;top:134.5px;" width="30" height="30" viewBox="0 0 30 30"><path d="M7 10.7 H23.5 L25.5 19 H4.5 Z" fill="#f0f0f0" stroke="#d8d8d8" stroke-width="0.6"/><rect x="4.5" y="19" width="21" height="7.5" rx="0.8" fill="#f6f6f6"/><rect x="6.5" y="19.6" width="17" height="5" fill="#fff" stroke="#62665c" stroke-width="0.9"/><rect x="8" y="21" width="9.5" height="1.8" fill="#c4c4c4"/><rect x="19.1" y="20" width="1" height="4.2" fill="#111"/><path d="M5 10.5 Q7.5 4.5 13 6 Q17.8 7.5 17.8 13.5 H21 L15.5 19.5 L10 13.5 H12.6 Q12.6 9.8 9.8 9.6 Q7.3 9.5 5 10.5 Z" fill="#5a9ed6" stroke="#2a64a4" stroke-width="0.7"/></svg>
<svg class="b" style="left:1528.0px;top:149.0px;" width="8" height="5" viewBox="0 0 8 5"><path d="M0 0 L8 0 L4.0 5 Z" fill="#d4d5d6"/></svg>
<div class="b" style="left:1546px;top:135px;width:2px;height:33px;background:#5d6165;"></div>
<div class="b" style="left:1552px;top:135px;width:238px;height:31px;border:1px solid #6a6d70;border-radius:3px"></div>
<div class="t" style="left:1557.18px;top:143.16px;font-size:18.00px;font-family:'Liberation Sans',sans-serif;color:#eff0f1;transform:scaleX(0.8856);">Show all and focus on newest</div>
<svg class="b" style="left:1778.5px;top:149.0px;" width="8" height="5" viewBox="0 0 8 5"><path d="M0 0 L8 0 L4.0 5 Z" fill="#a9abad"/></svg>
<div class="b" style="left:1794px;top:135px;width:2px;height:33px;background:#5d6165;"></div>
<div class="b" style="left:1801px;top:142px;width:14px;height:14px;border:1px solid #76797c;border-radius:2px"></div>
<div class="b" style="left:1804px;top:145px;width:10px;height:10px;background:#b4b4b4;"></div>
<div class="t" style="left:1822.16px;top:143.16px;font-size:18.00px;font-family:'Liberation Sans',sans-serif;color:#eff0f1;transform:scaleX(0.8606);">Hide Hidden Rows/Classes</div>
<div class="b" style="left:1276px;top:182px;width:1119px;height:1549px;background:#232629;"></div>
<div class="b" style="left:1276px;top:182px;width:1119px;height:1.6px;background:#7b7e81;"></div>
<div class="b" style="left:1276px;top:182px;width:1.2px;height:1549px;background:#7b7e81;"></div>
<div class="b" style="left:2393px;top:182px;width:1.2px;height:1549px;background:#7b7e81;"></div>
<div class="b" style="left:1277px;top:184px;width:1116px;height:41px;background:#334e5f;"></div>
<div class="b" style="left:1277px;top:225px;width:1116px;height:1px;background:#7b7e81;"></div>
<div class="b" style="left:1426px;top:184px;width:1px;height:41px;background:#6f7478;"></div>
<div class="b" style="left:1576px;top:184px;width:1px;height:41px;background:#6f7478;"></div>
<div class="b" style="left:1726px;top:184px;width:1px;height:41px;background:#6f7478;"></div>
<div class="b" style="left:1876px;top:184px;width:1px;height:41px;background:#6f7478;"></div>
<div class="b" style="left:2026px;top:184px;width:1px;height:41px;background:#6f7478;"></div>
<div class="t" style="left:1321.48px;top:196.83px;font-size:17.80px;font-family:'Liberation Sans',sans-serif;font-weight:700;color:#eff0f1;transform:scaleX(0.9691);">Sample</div>
<div class="t" style="left:1482.23px;top:196.83px;font-size:17.80px;font-family:'Liberation Sans',sans-serif;font-weight:700;color:#eff0f1;transform:scaleX(0.9801);">Time</div>
<div class="t" style="left:1617.35px;top:196.83px;font-size:17.80px;font-family:'Liberation Sans',sans-serif;font-weight:700;color:#eff0f1;transform:scaleX(0.9502);">Decoder</div>
<div class="t" style="left:1765.03px;top:196.83px;font-size:17.80px;font-family:'Liberation Sans',sans-serif;font-weight:700;color:#eff0f1;transform:scaleX(0.9450);">Ann Row</div>
<div class="t" style="left:1911.44px;top:196.83px;font-size:17.80px;font-family:'Liberation Sans',sans-serif;font-weight:700;color:#eff0f1;transform:scaleX(0.9233);">Ann Class</div>
<div class="t" style="left:2186.66px;top:196.83px;font-size:17.80px;font-family:'Liberation Sans',sans-serif;font-weight:700;color:#eff0f1;transform:scaleX(1.0165);">Value</div>
<svg class="b" style="left:1406.5px;top:202px;" width="8" height="4.5" viewBox="0 0 8 4.5"><path d="M0 4.5 L8 4.5 L4 0 Z" fill="#dcdcdc"/></svg>
<div class="b" style="left:1277px;top:226px;width:1116px;height:24px;background:#6e3573;"></div>
<div class="b" style="left:1277px;top:250px;width:1116px;height:1px;background:#2b2e31;"></div>
<div class="t" style="left:1280.27px;top:230.84px;font-size:18.50px;font-family:'Liberation Sans',sans-serif;color:#eff0f1;transform:scaleX(0.9550);">163682834</div>
<div class="t" style="left:1429.44px;top:230.84px;font-size:18.50px;font-family:'Liberation Sans',sans-serif;color:#eff0f1;transform:scaleX(0.9300);">6.547 s</div>
<div class="t" style="left:1579.75px;top:230.84px;font-size:18.50px;font-family:'Liberation Sans',sans-serif;color:#eff0f1;transform:scaleX(0.9000);">UART</div>
<div class="t" style="left:1731.17px;top:230.84px;font-size:18.50px;font-family:'Liberation Sans',sans-serif;color:#eff0f1;transform:scaleX(0.9000);">TX data</div>
<div class="t" style="left:1881.17px;top:230.84px;font-size:18.50px;font-family:'Liberation Sans',sans-serif;color:#eff0f1;transform:scaleX(0.9000);">TX data</div>
<div class="t" style="left:2030.30px;top:230.84px;font-size:18.50px;font-family:'Liberation Sans',sans-serif;color:#eff0f1;transform:scaleX(0.9300);">AA</div>
<div class="b" style="left:1277px;top:251px;width:1116px;height:24px;background:#6e3573;"></div>
<div class="b" style="left:1277px;top:275px;width:1116px;height:1px;background:#2b2e31;"></div>
<div class="t" style="left:1280.27px;top:255.84px;font-size:18.50px;font-family:'Liberation Sans',sans-serif;color:#eff0f1;transform:scaleX(0.9550);">163684997</div>
<div class="t" style="left:1429.44px;top:255.84px;font-size:18.50px;font-family:'Liberation Sans',sans-serif;color:#eff0f1;transform:scaleX(0.9300);">6.547 s</div>
<div class="t" style="left:1579.75px;top:255.84px;font-size:18.50px;font-family:'Liberation Sans',sans-serif;color:#eff0f1;transform:scaleX(0.9000);">UART</div>
<div class="t" style="left:1731.17px;top:255.84px;font-size:18.50px;font-family:'Liberation Sans',sans-serif;color:#eff0f1;transform:scaleX(0.9000);">TX data</div>
<div class="t" style="left:1881.17px;top:255.84px;font-size:18.50px;font-family:'Liberation Sans',sans-serif;color:#eff0f1;transform:scaleX(0.9000);">TX data</div>
<div class="t" style="left:2029.61px;top:255.84px;font-size:18.50px;font-family:'Liberation Sans',sans-serif;color:#eff0f1;transform:scaleX(0.9300);">55</div>
<div class="b" style="left:1277px;top:276px;width:1116px;height:24px;background:#1a435a;"></div>
<div class="b" style="left:1277px;top:300px;width:1116px;height:1px;background:#2b2e31;"></div>
<div class="t" style="left:1280.27px;top:280.84px;font-size:18.50px;font-family:'Liberation Sans',sans-serif;color:#eff0f1;transform:scaleX(0.9550);">163687161</div>
<div class="t" style="left:1429.44px;top:280.84px;font-size:18.50px;font-family:'Liberation Sans',sans-serif;color:#eff0f1;transform:scaleX(0.9300);">6.547 s</div>
<div class="t" style="left:1579.75px;top:280.84px;font-size:18.50px;font-family:'Liberation Sans',sans-serif;color:#eff0f1;transform:scaleX(0.9000);">UART</div>
<div class="t" style="left:1731.17px;top:280.84px;font-size:18.50px;font-family:'Liberation Sans',sans-serif;color:#eff0f1;transform:scaleX(0.9000);">TX data</div>
<div class="t" style="left:1881.17px;top:280.84px;font-size:18.50px;font-family:'Liberation Sans',sans-serif;color:#eff0f1;transform:scaleX(0.9000);">TX data</div>
<div class="t" style="left:2029.61px;top:280.84px;font-size:18.50px;font-family:'Liberation Sans',sans-serif;color:#eff0f1;transform:scaleX(0.9300);">00</div>
<div class="b" style="left:1277px;top:301px;width:1116px;height:24px;background:#6e3573;"></div>
<div class="b" style="left:1277px;top:325px;width:1116px;height:1px;background:#2b2e31;"></div>
<div class="t" style="left:1280.27px;top:305.84px;font-size:18.50px;font-family:'Liberation Sans',sans-serif;color:#eff0f1;transform:scaleX(0.9550);">163689324</div>
<div class="t" style="left:1429.44px;top:305.84px;font-size:18.50px;font-family:'Liberation Sans',sans-serif;color:#eff0f1;transform:scaleX(0.9300);">6.548 s</div>
<div class="t" style="left:1579.75px;top:305.84px;font-size:18.50px;font-family:'Liberation Sans',sans-serif;color:#eff0f1;transform:scaleX(0.9000);">UART</div>
<div class="t" style="left:1731.17px;top:305.84px;font-size:18.50px;font-family:'Liberation Sans',sans-serif;color:#eff0f1;transform:scaleX(0.9000);">TX data</div>
<div class="t" style="left:1881.17px;top:305.84px;font-size:18.50px;font-family:'Liberation Sans',sans-serif;color:#eff0f1;transform:scaleX(0.9000);">TX data</div>
<div class="t" style="left:2029.44px;top:305.84px;font-size:18.50px;font-family:'Liberation Sans',sans-serif;color:#eff0f1;transform:scaleX(0.9300);">77</div>
<div class="b" style="left:1277px;top:326px;width:1116px;height:24px;background:#6e3573;"></div>
<div class="b" style="left:1277px;top:350px;width:1116px;height:1px;background:#2b2e31;"></div>
<div class="t" style="left:1280.27px;top:330.84px;font-size:18.50px;font-family:'Liberation Sans',sans-serif;color:#eff0f1;transform:scaleX(0.9550);">163691488</div>
<div class="t" style="left:1429.44px;top:330.84px;font-size:18.50px;font-family:'Liberation Sans',sans-serif;color:#eff0f1;transform:scaleX(0.9300);">6.548 s</div>
<div class="t" style="left:1579.75px;top:330.84px;font-size:18.50px;font-family:'Liberation Sans',sans-serif;color:#eff0f1;transform:scaleX(0.9000);">UART</div>
<div class="t" style="left:1731.17px;top:330.84px;font-size:18.50px;font-family:'Liberation Sans',sans-serif;color:#eff0f1;transform:scaleX(0.9000);">TX data</div>
<div class="t" style="left:1881.17px;top:330.84px;font-size:18.50px;font-family:'Liberation Sans',sans-serif;color:#eff0f1;transform:scaleX(0.9000);">TX data</div>
<div class="t" style="left:2029.61px;top:330.84px;font-size:18.50px;font-family:'Liberation Sans',sans-serif;color:#eff0f1;transform:scaleX(0.9300);">00</div>
<div class="b" style="left:1277px;top:351px;width:1116px;height:24px;background:#6e3573;"></div>
<div class="b" style="left:1277px;top:375px;width:1116px;height:1px;background:#2b2e31;"></div>
<div class="t" style="left:1280.27px;top:355.84px;font-size:18.50px;font-family:'Liberation Sans',sans-serif;color:#eff0f1;transform:scaleX(0.9550);">163693651</div>
<div class="t" style="left:1429.44px;top:355.84px;font-size:18.50px;font-family:'Liberation Sans',sans-serif;color:#eff0f1;transform:scaleX(0.9300);">6.548 s</div>
<div class="t" style="left:1579.75px;top:355.84px;font-size:18.50px;font-family:'Liberation Sans',sans-serif;color:#eff0f1;transform:scaleX(0.9000);">UART</div>
<div class="t" style="left:1731.17px;top:355.84px;font-size:18.50px;font-family:'Liberation Sans',sans-serif;color:#eff0f1;transform:scaleX(0.9000);">TX data</div>
<div class="t" style="left:1881.17px;top:355.84px;font-size:18.50px;font-family:'Liberation Sans',sans-serif;color:#eff0f1;transform:scaleX(0.9000);">TX data</div>
<div class="t" style="left:2029.61px;top:355.84px;font-size:18.50px;font-family:'Liberation Sans',sans-serif;color:#eff0f1;transform:scaleX(0.9300);">00</div>
<div class="b" style="left:1277px;top:376px;width:1116px;height:24px;background:#6e3573;"></div>
<div class="b" style="left:1277px;top:400px;width:1116px;height:1px;background:#2b2e31;"></div>
<div class="t" style="left:1280.27px;top:380.84px;font-size:18.50px;font-family:'Liberation Sans',sans-serif;color:#eff0f1;transform:scaleX(0.9550);">163695815</div>
<div class="t" style="left:1429.44px;top:380.84px;font-size:18.50px;font-family:'Liberation Sans',sans-serif;color:#eff0f1;transform:scaleX(0.9300);">6.548 s</div>
<div class="t" style="left:1579.75px;top:380.84px;font-size:18.50px;font-family:'Liberation Sans',sans-serif;color:#eff0f1;transform:scaleX(0.9000);">UART</div>
<div class="t" style="left:1731.17px;top:380.84px;font-size:18.50px;font-family:'Liberation Sans',sans-serif;color:#eff0f1;transform:scaleX(0.9000);">TX data</div>
<div class="t" style="left:1881.17px;top:380.84px;font-size:18.50px;font-family:'Liberation Sans',sans-serif;color:#eff0f1;transform:scaleX(0.9000);">TX data</div>
<div class="t" style="left:2029.61px;top:380.84px;font-size:18.50px;font-family:'Liberation Sans',sans-serif;color:#eff0f1;transform:scaleX(0.9300);">00</div>
<div class="b" style="left:1277px;top:401px;width:1116px;height:24px;background:#6e3573;"></div>
<div class="b" style="left:1277px;top:425px;width:1116px;height:1px;background:#2b2e31;"></div>
<div class="t" style="left:1280.27px;top:405.84px;font-size:18.50px;font-family:'Liberation Sans',sans-serif;color:#eff0f1;transform:scaleX(0.9550);">163697978</div>
<div class="t" style="left:1429.44px;top:405.84px;font-size:18.50px;font-family:'Liberation Sans',sans-serif;color:#eff0f1;transform:scaleX(0.9300);">6.548 s</div>
<div class="t" style="left:1579.75px;top:405.84px;font-size:18.50px;font-family:'Liberation Sans',sans-serif;color:#eff0f1;transform:scaleX(0.9000);">UART</div>
<div class="t" style="left:1731.17px;top:405.84px;font-size:18.50px;font-family:'Liberation Sans',sans-serif;color:#eff0f1;transform:scaleX(0.9000);">TX data</div>
<div class="t" style="left:1881.17px;top:405.84px;font-size:18.50px;font-family:'Liberation Sans',sans-serif;color:#eff0f1;transform:scaleX(0.9000);">TX data</div>
<div class="t" style="left:2029.61px;top:405.84px;font-size:18.50px;font-family:'Liberation Sans',sans-serif;color:#eff0f1;transform:scaleX(0.9300);">00</div>
<div class="b" style="left:1277px;top:426px;width:1116px;height:24px;background:#6e3573;"></div>
<div class="b" style="left:1277px;top:450px;width:1116px;height:1px;background:#2b2e31;"></div>
<div class="t" style="left:1280.27px;top:430.84px;font-size:18.50px;font-family:'Liberation Sans',sans-serif;color:#eff0f1;transform:scaleX(0.9550);">163700142</div>
<div class="t" style="left:1429.44px;top:430.84px;font-size:18.50px;font-family:'Liberation Sans',sans-serif;color:#eff0f1;transform:scaleX(0.9300);">6.548 s</div>
<div class="t" style="left:1579.75px;top:430.84px;font-size:18.50px;font-family:'Liberation Sans',sans-serif;color:#eff0f1;transform:scaleX(0.9000);">UART</div>
<div class="t" style="left:1731.17px;top:430.84px;font-size:18.50px;font-family:'Liberation Sans',sans-serif;color:#eff0f1;transform:scaleX(0.9000);">TX data</div>
<div class="t" style="left:1881.17px;top:430.84px;font-size:18.50px;font-family:'Liberation Sans',sans-serif;color:#eff0f1;transform:scaleX(0.9000);">TX data</div>
<div class="t" style="left:2028.92px;top:430.84px;font-size:18.50px;font-family:'Liberation Sans',sans-serif;color:#eff0f1;transform:scaleX(0.9300);">B7</div>
<div class="b" style="left:1277px;top:451px;width:1116px;height:24px;background:#367349;"></div>
<div class="b" style="left:1277px;top:475px;width:1116px;height:1px;background:#2b2e31;"></div>
<div class="t" style="left:1280.27px;top:455.84px;font-size:18.50px;font-family:'Liberation Sans',sans-serif;color:#eff0f1;transform:scaleX(0.9550);">163815264</div>
<div class="t" style="left:1429.44px;top:455.84px;font-size:18.50px;font-family:'Liberation Sans',sans-serif;color:#eff0f1;transform:scaleX(0.9300);">6.553 s</div>
<div class="t" style="left:1579.75px;top:455.84px;font-size:18.50px;font-family:'Liberation Sans',sans-serif;color:#eff0f1;transform:scaleX(0.9000);">UART</div>
<div class="t" style="left:1730.17px;top:455.84px;font-size:18.50px;font-family:'Liberation Sans',sans-serif;color:#eff0f1;transform:scaleX(0.9000);">RX data</div>
<div class="t" style="left:1880.17px;top:455.84px;font-size:18.50px;font-family:'Liberation Sans',sans-serif;color:#eff0f1;transform:scaleX(0.9000);">RX data</div>
<div class="t" style="left:2030.30px;top:455.84px;font-size:18.50px;font-family:'Liberation Sans',sans-serif;color:#eff0f1;transform:scaleX(0.9300);">AA</div>
<div class="b" style="left:1277px;top:476px;width:1116px;height:24px;background:#367349;"></div>
<div class="b" style="left:1277px;top:500px;width:1116px;height:1px;background:#2b2e31;"></div>
<div class="t" style="left:1280.27px;top:480.84px;font-size:18.50px;font-family:'Liberation Sans',sans-serif;color:#eff0f1;transform:scaleX(0.9550);">163817427</div>
<div class="t" style="left:1429.44px;top:480.84px;font-size:18.50px;font-family:'Liberation Sans',sans-serif;color:#eff0f1;transform:scaleX(0.9300);">6.553 s</div>
<div class="t" style="left:1579.75px;top:480.84px;font-size:18.50px;font-family:'Liberation Sans',sans-serif;color:#eff0f1;transform:scaleX(0.9000);">UART</div>
<div class="t" style="left:1730.17px;top:480.84px;font-size:18.50px;font-family:'Liberation Sans',sans-serif;color:#eff0f1;transform:scaleX(0.9000);">RX data</div>
<div class="t" style="left:1880.17px;top:480.84px;font-size:18.50px;font-family:'Liberation Sans',sans-serif;color:#eff0f1;transform:scaleX(0.9000);">RX data</div>
<div class="t" style="left:2029.61px;top:480.84px;font-size:18.50px;font-family:'Liberation Sans',sans-serif;color:#eff0f1;transform:scaleX(0.9300);">55</div>
<div class="b" style="left:1277px;top:501px;width:1116px;height:24px;background:#367349;"></div>
<div class="b" style="left:1277px;top:525px;width:1116px;height:1px;background:#2b2e31;"></div>
<div class="t" style="left:1280.27px;top:505.84px;font-size:18.50px;font-family:'Liberation Sans',sans-serif;color:#eff0f1;transform:scaleX(0.9550);">163819590</div>
<div class="t" style="left:1429.44px;top:505.84px;font-size:18.50px;font-family:'Liberation Sans',sans-serif;color:#eff0f1;transform:scaleX(0.9300);">6.553 s</div>
<div class="t" style="left:1579.75px;top:505.84px;font-size:18.50px;font-family:'Liberation Sans',sans-serif;color:#eff0f1;transform:scaleX(0.9000);">UART</div>
<div class="t" style="left:1730.17px;top:505.84px;font-size:18.50px;font-family:'Liberation Sans',sans-serif;color:#eff0f1;transform:scaleX(0.9000);">RX data</div>
<div class="t" style="left:1880.17px;top:505.84px;font-size:18.50px;font-family:'Liberation Sans',sans-serif;color:#eff0f1;transform:scaleX(0.9000);">RX data</div>
<div class="t" style="left:2029.61px;top:505.84px;font-size:18.50px;font-family:'Liberation Sans',sans-serif;color:#eff0f1;transform:scaleX(0.9300);">00</div>
<div class="b" style="left:1277px;top:526px;width:1116px;height:24px;background:#367349;"></div>
<div class="b" style="left:1277px;top:550px;width:1116px;height:1px;background:#2b2e31;"></div>
<div class="t" style="left:1280.27px;top:530.84px;font-size:18.50px;font-family:'Liberation Sans',sans-serif;color:#eff0f1;transform:scaleX(0.9550);">163821753</div>
<div class="t" style="left:1429.44px;top:530.84px;font-size:18.50px;font-family:'Liberation Sans',sans-serif;color:#eff0f1;transform:scaleX(0.9300);">6.553 s</div>
<div class="t" style="left:1579.75px;top:530.84px;font-size:18.50px;font-family:'Liberation Sans',sans-serif;color:#eff0f1;transform:scaleX(0.9000);">UART</div>
<div class="t" style="left:1730.17px;top:530.84px;font-size:18.50px;font-family:'Liberation Sans',sans-serif;color:#eff0f1;transform:scaleX(0.9000);">RX data</div>
<div class="t" style="left:1880.17px;top:530.84px;font-size:18.50px;font-family:'Liberation Sans',sans-serif;color:#eff0f1;transform:scaleX(0.9000);">RX data</div>
<div class="t" style="left:2029.44px;top:530.84px;font-size:18.50px;font-family:'Liberation Sans',sans-serif;color:#eff0f1;transform:scaleX(0.9300);">77</div>
<div class="b" style="left:1277px;top:551px;width:1116px;height:24px;background:#367349;"></div>
<div class="b" style="left:1277px;top:575px;width:1116px;height:1px;background:#2b2e31;"></div>
<div class="t" style="left:1280.27px;top:555.84px;font-size:18.50px;font-family:'Liberation Sans',sans-serif;color:#eff0f1;transform:scaleX(0.9550);">163823916</div>
<div class="t" style="left:1429.44px;top:555.84px;font-size:18.50px;font-family:'Liberation Sans',sans-serif;color:#eff0f1;transform:scaleX(0.9300);">6.553 s</div>
<div class="t" style="left:1579.75px;top:555.84px;font-size:18.50px;font-family:'Liberation Sans',sans-serif;color:#eff0f1;transform:scaleX(0.9000);">UART</div>
<div class="t" style="left:1730.17px;top:555.84px;font-size:18.50px;font-family:'Liberation Sans',sans-serif;color:#eff0f1;transform:scaleX(0.9000);">RX data</div>
<div class="t" style="left:1880.17px;top:555.84px;font-size:18.50px;font-family:'Liberation Sans',sans-serif;color:#eff0f1;transform:scaleX(0.9000);">RX data</div>
<div class="t" style="left:2029.61px;top:555.84px;font-size:18.50px;font-family:'Liberation Sans',sans-serif;color:#eff0f1;transform:scaleX(0.9300);">00</div>
<div class="b" style="left:1277px;top:576px;width:1116px;height:24px;background:#367349;"></div>
<div class="b" style="left:1277px;top:600px;width:1116px;height:1px;background:#2b2e31;"></div>
<div class="t" style="left:1280.27px;top:580.84px;font-size:18.50px;font-family:'Liberation Sans',sans-serif;color:#eff0f1;transform:scaleX(0.9550);">163826079</div>
<div class="t" style="left:1429.44px;top:580.84px;font-size:18.50px;font-family:'Liberation Sans',sans-serif;color:#eff0f1;transform:scaleX(0.9300);">6.553 s</div>
<div class="t" style="left:1579.75px;top:580.84px;font-size:18.50px;font-family:'Liberation Sans',sans-serif;color:#eff0f1;transform:scaleX(0.9000);">UART</div>
<div class="t" style="left:1730.17px;top:580.84px;font-size:18.50px;font-family:'Liberation Sans',sans-serif;color:#eff0f1;transform:scaleX(0.9000);">RX data</div>
<div class="t" style="left:1880.17px;top:580.84px;font-size:18.50px;font-family:'Liberation Sans',sans-serif;color:#eff0f1;transform:scaleX(0.9000);">RX data</div>
<div class="t" style="left:2029.61px;top:580.84px;font-size:18.50px;font-family:'Liberation Sans',sans-serif;color:#eff0f1;transform:scaleX(0.9300);">00</div>
<div class="b" style="left:1277px;top:601px;width:1116px;height:24px;background:#367349;"></div>
<div class="b" style="left:1277px;top:625px;width:1116px;height:1px;background:#2b2e31;"></div>
<div class="t" style="left:1280.27px;top:605.84px;font-size:18.50px;font-family:'Liberation Sans',sans-serif;color:#eff0f1;transform:scaleX(0.9550);">163828243</div>
<div class="t" style="left:1429.44px;top:605.84px;font-size:18.50px;font-family:'Liberation Sans',sans-serif;color:#eff0f1;transform:scaleX(0.9300);">6.553 s</div>
<div class="t" style="left:1579.75px;top:605.84px;font-size:18.50px;font-family:'Liberation Sans',sans-serif;color:#eff0f1;transform:scaleX(0.9000);">UART</div>
<div class="t" style="left:1730.17px;top:605.84px;font-size:18.50px;font-family:'Liberation Sans',sans-serif;color:#eff0f1;transform:scaleX(0.9000);">RX data</div>
<div class="t" style="left:1880.17px;top:605.84px;font-size:18.50px;font-family:'Liberation Sans',sans-serif;color:#eff0f1;transform:scaleX(0.9000);">RX data</div>
<div class="t" style="left:2029.61px;top:605.84px;font-size:18.50px;font-family:'Liberation Sans',sans-serif;color:#eff0f1;transform:scaleX(0.9300);">00</div>
<div class="b" style="left:1277px;top:626px;width:1116px;height:24px;background:#367349;"></div>
<div class="b" style="left:1277px;top:650px;width:1116px;height:1px;background:#2b2e31;"></div>
<div class="t" style="left:1280.27px;top:630.84px;font-size:18.50px;font-family:'Liberation Sans',sans-serif;color:#eff0f1;transform:scaleX(0.9550);">163830406</div>
<div class="t" style="left:1429.44px;top:630.84px;font-size:18.50px;font-family:'Liberation Sans',sans-serif;color:#eff0f1;transform:scaleX(0.9300);">6.553 s</div>
<div class="t" style="left:1579.75px;top:630.84px;font-size:18.50px;font-family:'Liberation Sans',sans-serif;color:#eff0f1;transform:scaleX(0.9000);">UART</div>
<div class="t" style="left:1730.17px;top:630.84px;font-size:18.50px;font-family:'Liberation Sans',sans-serif;color:#eff0f1;transform:scaleX(0.9000);">RX data</div>
<div class="t" style="left:1880.17px;top:630.84px;font-size:18.50px;font-family:'Liberation Sans',sans-serif;color:#eff0f1;transform:scaleX(0.9000);">RX data</div>
<div class="t" style="left:2029.53px;top:630.84px;font-size:18.50px;font-family:'Liberation Sans',sans-serif;color:#eff0f1;transform:scaleX(0.9300);">80</div>
<div class="b" style="left:1277px;top:651px;width:1116px;height:24px;background:#367349;"></div>
<div class="b" style="left:1277px;top:675px;width:1116px;height:1px;background:#2b2e31;"></div>
<div class="t" style="left:1280.27px;top:655.84px;font-size:18.50px;font-family:'Liberation Sans',sans-serif;color:#eff0f1;transform:scaleX(0.9550);">163832569</div>
<div class="t" style="left:1429.44px;top:655.84px;font-size:18.50px;font-family:'Liberation Sans',sans-serif;color:#eff0f1;transform:scaleX(0.9300);">6.553 s</div>
<div class="t" style="left:1579.75px;top:655.84px;font-size:18.50px;font-family:'Liberation Sans',sans-serif;color:#eff0f1;transform:scaleX(0.9000);">UART</div>
<div class="t" style="left:1730.17px;top:655.84px;font-size:18.50px;font-family:'Liberation Sans',sans-serif;color:#eff0f1;transform:scaleX(0.9000);">RX data</div>
<div class="t" style="left:1880.17px;top:655.84px;font-size:18.50px;font-family:'Liberation Sans',sans-serif;color:#eff0f1;transform:scaleX(0.9000);">RX data</div>
<div class="t" style="left:2029.53px;top:655.84px;font-size:18.50px;font-family:'Liberation Sans',sans-serif;color:#eff0f1;transform:scaleX(0.9300);">80</div>
<div class="b" style="left:1277px;top:676px;width:1116px;height:24px;background:#367349;"></div>
<div class="b" style="left:1277px;top:700px;width:1116px;height:1px;background:#2b2e31;"></div>
<div class="t" style="left:1280.27px;top:680.84px;font-size:18.50px;font-family:'Liberation Sans',sans-serif;color:#eff0f1;transform:scaleX(0.9550);">163834732</div>
<div class="t" style="left:1429.44px;top:680.84px;font-size:18.50px;font-family:'Liberation Sans',sans-serif;color:#eff0f1;transform:scaleX(0.9300);">6.553 s</div>
<div class="t" style="left:1579.75px;top:680.84px;font-size:18.50px;font-family:'Liberation Sans',sans-serif;color:#eff0f1;transform:scaleX(0.9000);">UART</div>
<div class="t" style="left:1730.17px;top:680.84px;font-size:18.50px;font-family:'Liberation Sans',sans-serif;color:#eff0f1;transform:scaleX(0.9000);">RX data</div>
<div class="t" style="left:1880.17px;top:680.84px;font-size:18.50px;font-family:'Liberation Sans',sans-serif;color:#eff0f1;transform:scaleX(0.9000);">RX data</div>
<div class="t" style="left:2028.92px;top:680.84px;font-size:18.50px;font-family:'Liberation Sans',sans-serif;color:#eff0f1;transform:scaleX(0.9300);">F7</div>
<div class="b" style="left:1277px;top:701px;width:1116px;height:24px;background:#6e3573;"></div>
<div class="b" style="left:1277px;top:725px;width:1116px;height:1px;background:#2b2e31;"></div>
<div class="t" style="left:1281.25px;top:705.84px;font-size:18.50px;font-family:'Liberation Sans',sans-serif;color:#eff0f1;transform:scaleX(0.9550);">413674123</div>
<div class="t" style="left:1429.01px;top:705.84px;font-size:18.50px;font-family:'Liberation Sans',sans-serif;color:#eff0f1;transform:scaleX(0.9300);">16.547 s</div>
<div class="t" style="left:1579.75px;top:705.84px;font-size:18.50px;font-family:'Liberation Sans',sans-serif;color:#eff0f1;transform:scaleX(0.9000);">UART</div>
<div class="t" style="left:1731.17px;top:705.84px;font-size:18.50px;font-family:'Liberation Sans',sans-serif;color:#eff0f1;transform:scaleX(0.9000);">TX data</div>
<div class="t" style="left:1881.17px;top:705.84px;font-size:18.50px;font-family:'Liberation Sans',sans-serif;color:#eff0f1;transform:scaleX(0.9000);">TX data</div>
<div class="t" style="left:2030.30px;top:705.84px;font-size:18.50px;font-family:'Liberation Sans',sans-serif;color:#eff0f1;transform:scaleX(0.9300);">AA</div>
<div class="b" style="left:1277px;top:726px;width:1116px;height:24px;background:#6e3573;"></div>
<div class="b" style="left:1277px;top:750px;width:1116px;height:1px;background:#2b2e31;"></div>
<div class="t" style="left:1281.25px;top:730.84px;font-size:18.50px;font-family:'Liberation Sans',sans-serif;color:#eff0f1;transform:scaleX(0.9550);">413676286</div>
<div class="t" style="left:1429.01px;top:730.84px;font-size:18.50px;font-family:'Liberation Sans',sans-serif;color:#eff0f1;transform:scaleX(0.9300);">16.547 s</div>
<div class="t" style="left:1579.75px;top:730.84px;font-size:18.50px;font-family:'Liberation Sans',sans-serif;color:#eff0f1;transform:scaleX(0.9000);">UART</div>
<div class="t" style="left:1731.17px;top:730.84px;font-size:18.50px;font-family:'Liberation Sans',sans-serif;color:#eff0f1;transform:scaleX(0.9000);">TX data</div>
<div class="t" style="left:1881.17px;top:730.84px;font-size:18.50px;font-family:'Liberation Sans',sans-serif;color:#eff0f1;transform:scaleX(0.9000);">TX data</div>
<div class="t" style="left:2029.61px;top:730.84px;font-size:18.50px;font-family:'Liberation Sans',sans-serif;color:#eff0f1;transform:scaleX(0.9300);">55</div>
<div class="b" style="left:1277px;top:751px;width:1116px;height:24px;background:#6e3573;"></div>
<div class="b" style="left:1277px;top:775px;width:1116px;height:1px;background:#2b2e31;"></div>
<div class="t" style="left:1281.25px;top:755.84px;font-size:18.50px;font-family:'Liberation Sans',sans-serif;color:#eff0f1;transform:scaleX(0.9550);">413678449</div>
<div class="t" style="left:1429.01px;top:755.84px;font-size:18.50px;font-family:'Liberation Sans',sans-serif;color:#eff0f1;transform:scaleX(0.9300);">16.547 s</div>
<div class="t" style="left:1579.75px;top:755.84px;font-size:18.50px;font-family:'Liberation Sans',sans-serif;color:#eff0f1;transform:scaleX(0.9000);">UART</div>
<div class="t" style="left:1731.17px;top:755.84px;font-size:18.50px;font-family:'Liberation Sans',sans-serif;color:#eff0f1;transform:scaleX(0.9000);">TX data</div>
<div class="t" style="left:1881.17px;top:755.84px;font-size:18.50px;font-family:'Liberation Sans',sans-serif;color:#eff0f1;transform:scaleX(0.9000);">TX data</div>
<div class="t" style="left:2029.61px;top:755.84px;font-size:18.50px;font-family:'Liberation Sans',sans-serif;color:#eff0f1;transform:scaleX(0.9300);">00</div>
<div class="b" style="left:1277px;top:776px;width:1116px;height:24px;background:#6e3573;"></div>
<div class="b" style="left:1277px;top:800px;width:1116px;height:1px;background:#2b2e31;"></div>
<div class="t" style="left:1281.25px;top:780.84px;font-size:18.50px;font-family:'Liberation Sans',sans-serif;color:#eff0f1;transform:scaleX(0.9550);">413680613</div>
<div class="t" style="left:1429.01px;top:780.84px;font-size:18.50px;font-family:'Liberation Sans',sans-serif;color:#eff0f1;transform:scaleX(0.9300);">16.547 s</div>
<div class="t" style="left:1579.75px;top:780.84px;font-size:18.50px;font-family:'Liberation Sans',sans-serif;color:#eff0f1;transform:scaleX(0.9000);">UART</div>
<div class="t" style="left:1731.17px;top:780.84px;font-size:18.50px;font-family:'Liberation Sans',sans-serif;color:#eff0f1;transform:scaleX(0.9000);">TX data</div>
<div class="t" style="left:1881.17px;top:780.84px;font-size:18.50px;font-family:'Liberation Sans',sans-serif;color:#eff0f1;transform:scaleX(0.9000);">TX data</div>
<div class="t" style="left:2028.92px;top:780.84px;font-size:18.50px;font-family:'Liberation Sans',sans-serif;color:#eff0f1;transform:scaleX(0.9300);">F7</div>
<div class="b" style="left:1277px;top:801px;width:1116px;height:24px;background:#6e3573;"></div>
<div class="b" style="left:1277px;top:825px;width:1116px;height:1px;background:#2b2e31;"></div>
<div class="t" style="left:1281.25px;top:805.84px;font-size:18.50px;font-family:'Liberation Sans',sans-serif;color:#eff0f1;transform:scaleX(0.9550);">413682776</div>
<div class="t" style="left:1429.01px;top:805.84px;font-size:18.50px;font-family:'Liberation Sans',sans-serif;color:#eff0f1;transform:scaleX(0.9300);">16.547 s</div>
<div class="t" style="left:1579.75px;top:805.84px;font-size:18.50px;font-family:'Liberation Sans',sans-serif;color:#eff0f1;transform:scaleX(0.9000);">UART</div>
<div class="t" style="left:1731.17px;top:805.84px;font-size:18.50px;font-family:'Liberation Sans',sans-serif;color:#eff0f1;transform:scaleX(0.9000);">TX data</div>
<div class="t" style="left:1881.17px;top:805.84px;font-size:18.50px;font-family:'Liberation Sans',sans-serif;color:#eff0f1;transform:scaleX(0.9000);">TX data</div>
<div class="t" style="left:2029.61px;top:805.84px;font-size:18.50px;font-family:'Liberation Sans',sans-serif;color:#eff0f1;transform:scaleX(0.9300);">00</div>
<div class="b" style="left:1277px;top:826px;width:1116px;height:24px;background:#6e3573;"></div>
<div class="b" style="left:1277px;top:850px;width:1116px;height:1px;background:#2b2e31;"></div>
<div class="t" style="left:1281.25px;top:830.84px;font-size:18.50px;font-family:'Liberation Sans',sans-serif;color:#eff0f1;transform:scaleX(0.9550);">413684940</div>
<div class="t" style="left:1429.01px;top:830.84px;font-size:18.50px;font-family:'Liberation Sans',sans-serif;color:#eff0f1;transform:scaleX(0.9300);">16.547 s</div>
<div class="t" style="left:1579.75px;top:830.84px;font-size:18.50px;font-family:'Liberation Sans',sans-serif;color:#eff0f1;transform:scaleX(0.9000);">UART</div>
<div class="t" style="left:1731.17px;top:830.84px;font-size:18.50px;font-family:'Liberation Sans',sans-serif;color:#eff0f1;transform:scaleX(0.9000);">TX data</div>
<div class="t" style="left:1881.17px;top:830.84px;font-size:18.50px;font-family:'Liberation Sans',sans-serif;color:#eff0f1;transform:scaleX(0.9000);">TX data</div>
<div class="t" style="left:2029.61px;top:830.84px;font-size:18.50px;font-family:'Liberation Sans',sans-serif;color:#eff0f1;transform:scaleX(0.9300);">00</div>
<div class="b" style="left:1277px;top:851px;width:1116px;height:24px;background:#6e3573;"></div>
<div class="b" style="left:1277px;top:875px;width:1116px;height:1px;background:#2b2e31;"></div>
<div class="t" style="left:1281.25px;top:855.84px;font-size:18.50px;font-family:'Liberation Sans',sans-serif;color:#eff0f1;transform:scaleX(0.9550);">413687103</div>
<div class="t" style="left:1429.01px;top:855.84px;font-size:18.50px;font-family:'Liberation Sans',sans-serif;color:#eff0f1;transform:scaleX(0.9300);">16.547 s</div>
<div class="t" style="left:1579.75px;top:855.84px;font-size:18.50px;font-family:'Liberation Sans',sans-serif;color:#eff0f1;transform:scaleX(0.9000);">UART</div>
<div class="t" style="left:1731.17px;top:855.84px;font-size:18.50px;font-family:'Liberation Sans',sans-serif;color:#eff0f1;transform:scaleX(0.9000);">TX data</div>
<div class="t" style="left:1881.17px;top:855.84px;font-size:18.50px;font-family:'Liberation Sans',sans-serif;color:#eff0f1;transform:scaleX(0.9000);">TX data</div>
<div class="t" style="left:2029.61px;top:855.84px;font-size:18.50px;font-family:'Liberation Sans',sans-serif;color:#eff0f1;transform:scaleX(0.9300);">00</div>
<div class="b" style="left:1277px;top:876px;width:1116px;height:24px;background:#6e3573;"></div>
<div class="b" style="left:1277px;top:900px;width:1116px;height:1px;background:#2b2e31;"></div>
<div class="t" style="left:1281.25px;top:880.84px;font-size:18.50px;font-family:'Liberation Sans',sans-serif;color:#eff0f1;transform:scaleX(0.9550);">413689267</div>
<div class="t" style="left:1429.01px;top:880.84px;font-size:18.50px;font-family:'Liberation Sans',sans-serif;color:#eff0f1;transform:scaleX(0.9300);">16.548 s</div>
<div class="t" style="left:1579.75px;top:880.84px;font-size:18.50px;font-family:'Liberation Sans',sans-serif;color:#eff0f1;transform:scaleX(0.9000);">UART</div>
<div class="t" style="left:1731.17px;top:880.84px;font-size:18.50px;font-family:'Liberation Sans',sans-serif;color:#eff0f1;transform:scaleX(0.9000);">TX data</div>
<div class="t" style="left:1881.17px;top:880.84px;font-size:18.50px;font-family:'Liberation Sans',sans-serif;color:#eff0f1;transform:scaleX(0.9000);">TX data</div>
<div class="t" style="left:2029.61px;top:880.84px;font-size:18.50px;font-family:'Liberation Sans',sans-serif;color:#eff0f1;transform:scaleX(0.9300);">00</div>
<div class="b" style="left:1277px;top:901px;width:1116px;height:24px;background:#6e3573;"></div>
<div class="b" style="left:1277px;top:925px;width:1116px;height:1px;background:#2b2e31;"></div>
<div class="t" style="left:1281.25px;top:905.84px;font-size:18.50px;font-family:'Liberation Sans',sans-serif;color:#eff0f1;transform:scaleX(0.9550);">413691430</div>
<div class="t" style="left:1429.01px;top:905.84px;font-size:18.50px;font-family:'Liberation Sans',sans-serif;color:#eff0f1;transform:scaleX(0.9300);">16.548 s</div>
<div class="t" style="left:1579.75px;top:905.84px;font-size:18.50px;font-family:'Liberation Sans',sans-serif;color:#eff0f1;transform:scaleX(0.9000);">UART</div>
<div class="t" style="left:1731.17px;top:905.84px;font-size:18.50px;font-family:'Liberation Sans',sans-serif;color:#eff0f1;transform:scaleX(0.9000);">TX data</div>
<div class="t" style="left:1881.17px;top:905.84px;font-size:18.50px;font-family:'Liberation Sans',sans-serif;color:#eff0f1;transform:scaleX(0.9000);">TX data</div>
<div class="t" style="left:2029.44px;top:905.84px;font-size:18.50px;font-family:'Liberation Sans',sans-serif;color:#eff0f1;transform:scaleX(0.9300);">77</div>
<div class="b" style="left:1277px;top:926px;width:1116px;height:24px;background:#367349;"></div>
<div class="b" style="left:1277px;top:950px;width:1116px;height:1px;background:#2b2e31;"></div>
<div class="t" style="left:1281.25px;top:930.84px;font-size:18.50px;font-family:'Liberation Sans',sans-serif;color:#eff0f1;transform:scaleX(0.9550);">413752202</div>
<div class="t" style="left:1429.01px;top:930.84px;font-size:18.50px;font-family:'Liberation Sans',sans-serif;color:#eff0f1;transform:scaleX(0.9300);">16.550 s</div>
<div class="t" style="left:1579.75px;top:930.84px;font-size:18.50px;font-family:'Liberation Sans',sans-serif;color:#eff0f1;transform:scaleX(0.9000);">UART</div>
<div class="t" style="left:1730.17px;top:930.84px;font-size:18.50px;font-family:'Liberation Sans',sans-serif;color:#eff0f1;transform:scaleX(0.9000);">RX data</div>
<div class="t" style="left:1880.17px;top:930.84px;font-size:18.50px;font-family:'Liberation Sans',sans-serif;color:#eff0f1;transform:scaleX(0.9000);">RX data</div>
<div class="t" style="left:2030.30px;top:930.84px;font-size:18.50px;font-family:'Liberation Sans',sans-serif;color:#eff0f1;transform:scaleX(0.9300);">AA</div>
<div class="b" style="left:1277px;top:951px;width:1116px;height:24px;background:#367349;"></div>
<div class="b" style="left:1277px;top:975px;width:1116px;height:1px;background:#2b2e31;"></div>
<div class="t" style="left:1281.25px;top:955.84px;font-size:18.50px;font-family:'Liberation Sans',sans-serif;color:#eff0f1;transform:scaleX(0.9550);">413754364</div>
<div class="t" style="left:1429.01px;top:955.84px;font-size:18.50px;font-family:'Liberation Sans',sans-serif;color:#eff0f1;transform:scaleX(0.9300);">16.550 s</div>
<div class="t" style="left:1579.75px;top:955.84px;font-size:18.50px;font-family:'Liberation Sans',sans-serif;color:#eff0f1;transform:scaleX(0.9000);">UART</div>
<div class="t" style="left:1730.17px;top:955.84px;font-size:18.50px;font-family:'Liberation Sans',sans-serif;color:#eff0f1;transform:scaleX(0.9000);">RX data</div>
<div class="t" style="left:1880.17px;top:955.84px;font-size:18.50px;font-family:'Liberation Sans',sans-serif;color:#eff0f1;transform:scaleX(0.9000);">RX data</div>
<div class="t" style="left:2029.61px;top:955.84px;font-size:18.50px;font-family:'Liberation Sans',sans-serif;color:#eff0f1;transform:scaleX(0.9300);">55</div>
<div class="b" style="left:1277px;top:976px;width:1116px;height:24px;background:#367349;"></div>
<div class="b" style="left:1277px;top:1000px;width:1116px;height:1px;background:#2b2e31;"></div>
<div class="t" style="left:1281.25px;top:980.84px;font-size:18.50px;font-family:'Liberation Sans',sans-serif;color:#eff0f1;transform:scaleX(0.9550);">413756528</div>
<div class="t" style="left:1429.01px;top:980.84px;font-size:18.50px;font-family:'Liberation Sans',sans-serif;color:#eff0f1;transform:scaleX(0.9300);">16.550 s</div>
<div class="t" style="left:1579.75px;top:980.84px;font-size:18.50px;font-family:'Liberation Sans',sans-serif;color:#eff0f1;transform:scaleX(0.9000);">UART</div>
<div class="t" style="left:1730.17px;top:980.84px;font-size:18.50px;font-family:'Liberation Sans',sans-serif;color:#eff0f1;transform:scaleX(0.9000);">RX data</div>
<div class="t" style="left:1880.17px;top:980.84px;font-size:18.50px;font-family:'Liberation Sans',sans-serif;color:#eff0f1;transform:scaleX(0.9000);">RX data</div>
<div class="t" style="left:2029.61px;top:980.84px;font-size:18.50px;font-family:'Liberation Sans',sans-serif;color:#eff0f1;transform:scaleX(0.9300);">00</div>
<div class="b" style="left:1277px;top:1001px;width:1116px;height:24px;background:#367349;"></div>
<div class="b" style="left:1277px;top:1025px;width:1116px;height:1px;background:#2b2e31;"></div>
<div class="t" style="left:1281.25px;top:1005.84px;font-size:18.50px;font-family:'Liberation Sans',sans-serif;color:#eff0f1;transform:scaleX(0.9550);">413758691</div>
<div class="t" style="left:1429.01px;top:1005.84px;font-size:18.50px;font-family:'Liberation Sans',sans-serif;color:#eff0f1;transform:scaleX(0.9300);">16.550 s</div>
<div class="t" style="left:1579.75px;top:1005.84px;font-size:18.50px;font-family:'Liberation Sans',sans-serif;color:#eff0f1;transform:scaleX(0.9000);">UART</div>
<div class="t" style="left:1730.17px;top:1005.84px;font-size:18.50px;font-family:'Liberation Sans',sans-serif;color:#eff0f1;transform:scaleX(0.9000);">RX data</div>
<div class="t" style="left:1880.17px;top:1005.84px;font-size:18.50px;font-family:'Liberation Sans',sans-serif;color:#eff0f1;transform:scaleX(0.9000);">RX data</div>
<div class="t" style="left:2028.92px;top:1005.84px;font-size:18.50px;font-family:'Liberation Sans',sans-serif;color:#eff0f1;transform:scaleX(0.9300);">F7</div>
<div class="b" style="left:1277px;top:1026px;width:1116px;height:24px;background:#367349;"></div>
<div class="b" style="left:1277px;top:1050px;width:1116px;height:1px;background:#2b2e31;"></div>
<div class="t" style="left:1281.25px;top:1030.84px;font-size:18.50px;font-family:'Liberation Sans',sans-serif;color:#eff0f1;transform:scaleX(0.9550);">413760855</div>
<div class="t" style="left:1429.01px;top:1030.84px;font-size:18.50px;font-family:'Liberation Sans',sans-serif;color:#eff0f1;transform:scaleX(0.9300);">16.550 s</div>
<div class="t" style="left:1579.75px;top:1030.84px;font-size:18.50px;font-family:'Liberation Sans',sans-serif;color:#eff0f1;transform:scaleX(0.9000);">UART</div>
<div class="t" style="left:1730.17px;top:1030.84px;font-size:18.50px;font-family:'Liberation Sans',sans-serif;color:#eff0f1;transform:scaleX(0.9000);">RX data</div>
<div class="t" style="left:1880.17px;top:1030.84px;font-size:18.50px;font-family:'Liberation Sans',sans-serif;color:#eff0f1;transform:scaleX(0.9000);">RX data</div>
<div class="t" style="left:2029.61px;top:1030.84px;font-size:18.50px;font-family:'Liberation Sans',sans-serif;color:#eff0f1;transform:scaleX(0.9300);">00</div>
<div class="b" style="left:1277px;top:1051px;width:1116px;height:24px;background:#367349;"></div>
<div class="b" style="left:1277px;top:1075px;width:1116px;height:1px;background:#2b2e31;"></div>
<div class="t" style="left:1281.25px;top:1055.84px;font-size:18.50px;font-family:'Liberation Sans',sans-serif;color:#eff0f1;transform:scaleX(0.9550);">413763018</div>
<div class="t" style="left:1429.01px;top:1055.84px;font-size:18.50px;font-family:'Liberation Sans',sans-serif;color:#eff0f1;transform:scaleX(0.9300);">16.551 s</div>
<div class="t" style="left:1579.75px;top:1055.84px;font-size:18.50px;font-family:'Liberation Sans',sans-serif;color:#eff0f1;transform:scaleX(0.9000);">UART</div>
<div class="t" style="left:1730.17px;top:1055.84px;font-size:18.50px;font-family:'Liberation Sans',sans-serif;color:#eff0f1;transform:scaleX(0.9000);">RX data</div>
<div class="t" style="left:1880.17px;top:1055.84px;font-size:18.50px;font-family:'Liberation Sans',sans-serif;color:#eff0f1;transform:scaleX(0.9000);">RX data</div>
<div class="t" style="left:2029.61px;top:1055.84px;font-size:18.50px;font-family:'Liberation Sans',sans-serif;color:#eff0f1;transform:scaleX(0.9300);">00</div>
<div class="b" style="left:1277px;top:1076px;width:1116px;height:24px;background:#367349;"></div>
<div class="b" style="left:1277px;top:1100px;width:1116px;height:1px;background:#2b2e31;"></div>
<div class="t" style="left:1281.25px;top:1080.84px;font-size:18.50px;font-family:'Liberation Sans',sans-serif;color:#eff0f1;transform:scaleX(0.9550);">413765181</div>
<div class="t" style="left:1429.01px;top:1080.84px;font-size:18.50px;font-family:'Liberation Sans',sans-serif;color:#eff0f1;transform:scaleX(0.9300);">16.551 s</div>
<div class="t" style="left:1579.75px;top:1080.84px;font-size:18.50px;font-family:'Liberation Sans',sans-serif;color:#eff0f1;transform:scaleX(0.9000);">UART</div>
<div class="t" style="left:1730.17px;top:1080.84px;font-size:18.50px;font-family:'Liberation Sans',sans-serif;color:#eff0f1;transform:scaleX(0.9000);">RX data</div>
<div class="t" style="left:1880.17px;top:1080.84px;font-size:18.50px;font-family:'Liberation Sans',sans-serif;color:#eff0f1;transform:scaleX(0.9000);">RX data</div>
<div class="t" style="left:2029.61px;top:1080.84px;font-size:18.50px;font-family:'Liberation Sans',sans-serif;color:#eff0f1;transform:scaleX(0.9300);">00</div>
<div class="b" style="left:1277px;top:1101px;width:1116px;height:24px;background:#367349;"></div>
<div class="b" style="left:1277px;top:1125px;width:1116px;height:1px;background:#2b2e31;"></div>
<div class="t" style="left:1281.25px;top:1105.84px;font-size:18.50px;font-family:'Liberation Sans',sans-serif;color:#eff0f1;transform:scaleX(0.9550);">413767345</div>
<div class="t" style="left:1429.01px;top:1105.84px;font-size:18.50px;font-family:'Liberation Sans',sans-serif;color:#eff0f1;transform:scaleX(0.9300);">16.551 s</div>
<div class="t" style="left:1579.75px;top:1105.84px;font-size:18.50px;font-family:'Liberation Sans',sans-serif;color:#eff0f1;transform:scaleX(0.9000);">UART</div>
<div class="t" style="left:1730.17px;top:1105.84px;font-size:18.50px;font-family:'Liberation Sans',sans-serif;color:#eff0f1;transform:scaleX(0.9000);">RX data</div>
<div class="t" style="left:1880.17px;top:1105.84px;font-size:18.50px;font-family:'Liberation Sans',sans-serif;color:#eff0f1;transform:scaleX(0.9000);">RX data</div>
<div class="t" style="left:2029.53px;top:1105.84px;font-size:18.50px;font-family:'Liberation Sans',sans-serif;color:#eff0f1;transform:scaleX(0.9300);">80</div>
<div class="b" style="left:1277px;top:1126px;width:1116px;height:24px;background:#367349;"></div>
<div class="b" style="left:1277px;top:1150px;width:1116px;height:1px;background:#2b2e31;"></div>
<div class="t" style="left:1281.25px;top:1130.84px;font-size:18.50px;font-family:'Liberation Sans',sans-serif;color:#eff0f1;transform:scaleX(0.9550);">413769509</div>
<div class="t" style="left:1429.01px;top:1130.84px;font-size:18.50px;font-family:'Liberation Sans',sans-serif;color:#eff0f1;transform:scaleX(0.9300);">16.551 s</div>
<div class="t" style="left:1579.75px;top:1130.84px;font-size:18.50px;font-family:'Liberation Sans',sans-serif;color:#eff0f1;transform:scaleX(0.9000);">UART</div>
<div class="t" style="left:1730.17px;top:1130.84px;font-size:18.50px;font-family:'Liberation Sans',sans-serif;color:#eff0f1;transform:scaleX(0.9000);">RX data</div>
<div class="t" style="left:1880.17px;top:1130.84px;font-size:18.50px;font-family:'Liberation Sans',sans-serif;color:#eff0f1;transform:scaleX(0.9000);">RX data</div>
<div class="t" style="left:2029.53px;top:1130.84px;font-size:18.50px;font-family:'Liberation Sans',sans-serif;color:#eff0f1;transform:scaleX(0.9300);">80</div>
<div class="b" style="left:1277px;top:1151px;width:1116px;height:24px;background:#367349;"></div>
<div class="b" style="left:1277px;top:1175px;width:1116px;height:1px;background:#2b2e31;"></div>
<div class="t" style="left:1281.25px;top:1155.84px;font-size:18.50px;font-family:'Liberation Sans',sans-serif;color:#eff0f1;transform:scaleX(0.9550);">413771672</div>
<div class="t" style="left:1429.01px;top:1155.84px;font-size:18.50px;font-family:'Liberation Sans',sans-serif;color:#eff0f1;transform:scaleX(0.9300);">16.551 s</div>
<div class="t" style="left:1579.75px;top:1155.84px;font-size:18.50px;font-family:'Liberation Sans',sans-serif;color:#eff0f1;transform:scaleX(0.9000);">UART</div>
<div class="t" style="left:1730.17px;top:1155.84px;font-size:18.50px;font-family:'Liberation Sans',sans-serif;color:#eff0f1;transform:scaleX(0.9000);">RX data</div>
<div class="t" style="left:1880.17px;top:1155.84px;font-size:18.50px;font-family:'Liberation Sans',sans-serif;color:#eff0f1;transform:scaleX(0.9000);">RX data</div>
<div class="t" style="left:2029.61px;top:1155.84px;font-size:18.50px;font-family:'Liberation Sans',sans-serif;color:#eff0f1;transform:scaleX(0.9300);">0F</div>
<div class="b" style="left:1277px;top:1176px;width:1116px;height:24px;background:#6e3573;"></div>
<div class="b" style="left:1277px;top:1200px;width:1116px;height:1px;background:#2b2e31;"></div>
<div class="t" style="left:1280.72px;top:1180.84px;font-size:18.50px;font-family:'Liberation Sans',sans-serif;color:#eff0f1;transform:scaleX(0.9550);">663648319</div>
<div class="t" style="left:1429.44px;top:1180.84px;font-size:18.50px;font-family:'Liberation Sans',sans-serif;color:#eff0f1;transform:scaleX(0.9300);">26.546 s</div>
<div class="t" style="left:1579.75px;top:1180.84px;font-size:18.50px;font-family:'Liberation Sans',sans-serif;color:#eff0f1;transform:scaleX(0.9000);">UART</div>
<div class="t" style="left:1731.17px;top:1180.84px;font-size:18.50px;font-family:'Liberation Sans',sans-serif;color:#eff0f1;transform:scaleX(0.9000);">TX data</div>
<div class="t" style="left:1881.17px;top:1180.84px;font-size:18.50px;font-family:'Liberation Sans',sans-serif;color:#eff0f1;transform:scaleX(0.9000);">TX data</div>
<div class="t" style="left:2030.30px;top:1180.84px;font-size:18.50px;font-family:'Liberation Sans',sans-serif;color:#eff0f1;transform:scaleX(0.9300);">AA</div>
<div class="b" style="left:1277px;top:1201px;width:1116px;height:24px;background:#6e3573;"></div>
<div class="b" style="left:1277px;top:1225px;width:1116px;height:1px;background:#2b2e31;"></div>
<div class="t" style="left:1280.72px;top:1205.84px;font-size:18.50px;font-family:'Liberation Sans',sans-serif;color:#eff0f1;transform:scaleX(0.9550);">663650483</div>
<div class="t" style="left:1429.44px;top:1205.84px;font-size:18.50px;font-family:'Liberation Sans',sans-serif;color:#eff0f1;transform:scaleX(0.9300);">26.546 s</div>
<div class="t" style="left:1579.75px;top:1205.84px;font-size:18.50px;font-family:'Liberation Sans',sans-serif;color:#eff0f1;transform:scaleX(0.9000);">UART</div>
<div class="t" style="left:1731.17px;top:1205.84px;font-size:18.50px;font-family:'Liberation Sans',sans-serif;color:#eff0f1;transform:scaleX(0.9000);">TX data</div>
<div class="t" style="left:1881.17px;top:1205.84px;font-size:18.50px;font-family:'Liberation Sans',sans-serif;color:#eff0f1;transform:scaleX(0.9000);">TX data</div>
<div class="t" style="left:2029.61px;top:1205.84px;font-size:18.50px;font-family:'Liberation Sans',sans-serif;color:#eff0f1;transform:scaleX(0.9300);">55</div>
<div class="b" style="left:1277px;top:1226px;width:1116px;height:24px;background:#6e3573;"></div>
<div class="b" style="left:1277px;top:1250px;width:1116px;height:1px;background:#2b2e31;"></div>
<div class="t" style="left:1280.72px;top:1230.84px;font-size:18.50px;font-family:'Liberation Sans',sans-serif;color:#eff0f1;transform:scaleX(0.9550);">663652646</div>
<div class="t" style="left:1429.44px;top:1230.84px;font-size:18.50px;font-family:'Liberation Sans',sans-serif;color:#eff0f1;transform:scaleX(0.9300);">26.546 s</div>
<div class="t" style="left:1579.75px;top:1230.84px;font-size:18.50px;font-family:'Liberation Sans',sans-serif;color:#eff0f1;transform:scaleX(0.9000);">UART</div>
<div class="t" style="left:1731.17px;top:1230.84px;font-size:18.50px;font-family:'Liberation Sans',sans-serif;color:#eff0f1;transform:scaleX(0.9000);">TX data</div>
<div class="t" style="left:1881.17px;top:1230.84px;font-size:18.50px;font-family:'Liberation Sans',sans-serif;color:#eff0f1;transform:scaleX(0.9000);">TX data</div>
<div class="t" style="left:2029.61px;top:1230.84px;font-size:18.50px;font-family:'Liberation Sans',sans-serif;color:#eff0f1;transform:scaleX(0.9300);">00</div>
<div class="b" style="left:1277px;top:1251px;width:1116px;height:24px;background:#6e3573;"></div>
<div class="b" style="left:1277px;top:1275px;width:1116px;height:1px;background:#2b2e31;"></div>
<div class="t" style="left:1280.72px;top:1255.84px;font-size:18.50px;font-family:'Liberation Sans',sans-serif;color:#eff0f1;transform:scaleX(0.9550);">663654810</div>
<div class="t" style="left:1429.44px;top:1255.84px;font-size:18.50px;font-family:'Liberation Sans',sans-serif;color:#eff0f1;transform:scaleX(0.9300);">26.546 s</div>
<div class="t" style="left:1579.75px;top:1255.84px;font-size:18.50px;font-family:'Liberation Sans',sans-serif;color:#eff0f1;transform:scaleX(0.9000);">UART</div>
<div class="t" style="left:1731.17px;top:1255.84px;font-size:18.50px;font-family:'Liberation Sans',sans-serif;color:#eff0f1;transform:scaleX(0.9000);">TX data</div>
<div class="t" style="left:1881.17px;top:1255.84px;font-size:18.50px;font-family:'Liberation Sans',sans-serif;color:#eff0f1;transform:scaleX(0.9000);">TX data</div>
<div class="t" style="left:2029.61px;top:1255.84px;font-size:18.50px;font-family:'Liberation Sans',sans-serif;color:#eff0f1;transform:scaleX(0.9300);">0F</div>
<div class="b" style="left:1277px;top:1276px;width:1116px;height:24px;background:#6e3573;"></div>
<div class="b" style="left:1277px;top:1300px;width:1116px;height:1px;background:#2b2e31;"></div>
<div class="t" style="left:1280.72px;top:1280.84px;font-size:18.50px;font-family:'Liberation Sans',sans-serif;color:#eff0f1;transform:scaleX(0.9550);">663656973</div>
<div class="t" style="left:1429.44px;top:1280.84px;font-size:18.50px;font-family:'Liberation Sans',sans-serif;color:#eff0f1;transform:scaleX(0.9300);">26.546 s</div>
<div class="t" style="left:1579.75px;top:1280.84px;font-size:18.50px;font-family:'Liberation Sans',sans-serif;color:#eff0f1;transform:scaleX(0.9000);">UART</div>
<div class="t" style="left:1731.17px;top:1280.84px;font-size:18.50px;font-family:'Liberation Sans',sans-serif;color:#eff0f1;transform:scaleX(0.9000);">TX data</div>
<div class="t" style="left:1881.17px;top:1280.84px;font-size:18.50px;font-family:'Liberation Sans',sans-serif;color:#eff0f1;transform:scaleX(0.9000);">TX data</div>
<div class="t" style="left:2029.61px;top:1280.84px;font-size:18.50px;font-family:'Liberation Sans',sans-serif;color:#eff0f1;transform:scaleX(0.9300);">00</div>
<div class="b" style="left:1277px;top:1301px;width:1116px;height:24px;background:#6e3573;"></div>
<div class="b" style="left:1277px;top:1325px;width:1116px;height:1px;background:#2b2e31;"></div>
<div class="t" style="left:1280.72px;top:1305.84px;font-size:18.50px;font-family:'Liberation Sans',sans-serif;color:#eff0f1;transform:scaleX(0.9550);">663659137</div>
<div class="t" style="left:1429.44px;top:1305.84px;font-size:18.50px;font-family:'Liberation Sans',sans-serif;color:#eff0f1;transform:scaleX(0.9300);">26.546 s</div>
<div class="t" style="left:1579.75px;top:1305.84px;font-size:18.50px;font-family:'Liberation Sans',sans-serif;color:#eff0f1;transform:scaleX(0.9000);">UART</div>
<div class="t" style="left:1731.17px;top:1305.84px;font-size:18.50px;font-family:'Liberation Sans',sans-serif;color:#eff0f1;transform:scaleX(0.9000);">TX data</div>
<div class="t" style="left:1881.17px;top:1305.84px;font-size:18.50px;font-family:'Liberation Sans',sans-serif;color:#eff0f1;transform:scaleX(0.9000);">TX data</div>
<div class="t" style="left:2029.61px;top:1305.84px;font-size:18.50px;font-family:'Liberation Sans',sans-serif;color:#eff0f1;transform:scaleX(0.9300);">00</div>
<div class="b" style="left:1277px;top:1326px;width:1116px;height:24px;background:#6e3573;"></div>
<div class="b" style="left:1277px;top:1350px;width:1116px;height:1px;background:#2b2e31;"></div>
<div class="t" style="left:1280.72px;top:1330.84px;font-size:18.50px;font-family:'Liberation Sans',sans-serif;color:#eff0f1;transform:scaleX(0.9550);">663661300</div>
<div class="t" style="left:1429.44px;top:1330.84px;font-size:18.50px;font-family:'Liberation Sans',sans-serif;color:#eff0f1;transform:scaleX(0.9300);">26.546 s</div>
<div class="t" style="left:1579.75px;top:1330.84px;font-size:18.50px;font-family:'Liberation Sans',sans-serif;color:#eff0f1;transform:scaleX(0.9000);">UART</div>
<div class="t" style="left:1731.17px;top:1330.84px;font-size:18.50px;font-family:'Liberation Sans',sans-serif;color:#eff0f1;transform:scaleX(0.9000);">TX data</div>
<div class="t" style="left:1881.17px;top:1330.84px;font-size:18.50px;font-family:'Liberation Sans',sans-serif;color:#eff0f1;transform:scaleX(0.9000);">TX data</div>
<div class="t" style="left:2029.61px;top:1330.84px;font-size:18.50px;font-family:'Liberation Sans',sans-serif;color:#eff0f1;transform:scaleX(0.9300);">00</div>
<div class="b" style="left:1277px;top:1351px;width:1116px;height:24px;background:#6e3573;"></div>
<div class="b" style="left:1277px;top:1375px;width:1116px;height:1px;background:#2b2e31;"></div>
<div class="t" style="left:1280.72px;top:1355.84px;font-size:18.50px;font-family:'Liberation Sans',sans-serif;color:#eff0f1;transform:scaleX(0.9550);">663663464</div>
<div class="t" style="left:1429.44px;top:1355.84px;font-size:18.50px;font-family:'Liberation Sans',sans-serif;color:#eff0f1;transform:scaleX(0.9300);">26.547 s</div>
<div class="t" style="left:1579.75px;top:1355.84px;font-size:18.50px;font-family:'Liberation Sans',sans-serif;color:#eff0f1;transform:scaleX(0.9000);">UART</div>
<div class="t" style="left:1731.17px;top:1355.84px;font-size:18.50px;font-family:'Liberation Sans',sans-serif;color:#eff0f1;transform:scaleX(0.9000);">TX data</div>
<div class="t" style="left:1881.17px;top:1355.84px;font-size:18.50px;font-family:'Liberation Sans',sans-serif;color:#eff0f1;transform:scaleX(0.9000);">TX data</div>
<div class="t" style="left:2029.61px;top:1355.84px;font-size:18.50px;font-family:'Liberation Sans',sans-serif;color:#eff0f1;transform:scaleX(0.9300);">00</div>
<div class="b" style="left:1277px;top:1376px;width:1116px;height:24px;background:#6e3573;"></div>
<div class="b" style="left:1277px;top:1400px;width:1116px;height:1px;background:#2b2e31;"></div>
<div class="t" style="left:1280.72px;top:1380.84px;font-size:18.50px;font-family:'Liberation Sans',sans-serif;color:#eff0f1;transform:scaleX(0.9550);">663665627</div>
<div class="t" style="left:1429.44px;top:1380.84px;font-size:18.50px;font-family:'Liberation Sans',sans-serif;color:#eff0f1;transform:scaleX(0.9300);">26.547 s</div>
<div class="t" style="left:1579.75px;top:1380.84px;font-size:18.50px;font-family:'Liberation Sans',sans-serif;color:#eff0f1;transform:scaleX(0.9000);">UART</div>
<div class="t" style="left:1731.17px;top:1380.84px;font-size:18.50px;font-family:'Liberation Sans',sans-serif;color:#eff0f1;transform:scaleX(0.9000);">TX data</div>
<div class="t" style="left:1881.17px;top:1380.84px;font-size:18.50px;font-family:'Liberation Sans',sans-serif;color:#eff0f1;transform:scaleX(0.9000);">TX data</div>
<div class="t" style="left:2028.92px;top:1380.84px;font-size:18.50px;font-family:'Liberation Sans',sans-serif;color:#eff0f1;transform:scaleX(0.9300);">F7</div>
<div class="b" style="left:1277px;top:1401px;width:1116px;height:24px;background:#367349;"></div>
<div class="b" style="left:1277px;top:1425px;width:1116px;height:1px;background:#2b2e31;"></div>
<div class="t" style="left:1280.72px;top:1405.84px;font-size:18.50px;font-family:'Liberation Sans',sans-serif;color:#eff0f1;transform:scaleX(0.9550);">663681740</div>
<div class="t" style="left:1429.44px;top:1405.84px;font-size:18.50px;font-family:'Liberation Sans',sans-serif;color:#eff0f1;transform:scaleX(0.9300);">26.547 s</div>
<div class="t" style="left:1579.75px;top:1405.84px;font-size:18.50px;font-family:'Liberation Sans',sans-serif;color:#eff0f1;transform:scaleX(0.9000);">UART</div>
<div class="t" style="left:1730.17px;top:1405.84px;font-size:18.50px;font-family:'Liberation Sans',sans-serif;color:#eff0f1;transform:scaleX(0.9000);">RX data</div>
<div class="t" style="left:1880.17px;top:1405.84px;font-size:18.50px;font-family:'Liberation Sans',sans-serif;color:#eff0f1;transform:scaleX(0.9000);">RX data</div>
<div class="t" style="left:2030.30px;top:1405.84px;font-size:18.50px;font-family:'Liberation Sans',sans-serif;color:#eff0f1;transform:scaleX(0.9300);">AA</div>
<div class="b" style="left:1277px;top:1426px;width:1116px;height:24px;background:#367349;"></div>
<div class="b" style="left:1277px;top:1450px;width:1116px;height:1px;background:#2b2e31;"></div>
<div class="t" style="left:1280.72px;top:1430.84px;font-size:18.50px;font-family:'Liberation Sans',sans-serif;color:#eff0f1;transform:scaleX(0.9550);">663683904</div>
<div class="t" style="left:1429.44px;top:1430.84px;font-size:18.50px;font-family:'Liberation Sans',sans-serif;color:#eff0f1;transform:scaleX(0.9300);">26.547 s</div>
<div class="t" style="left:1579.75px;top:1430.84px;font-size:18.50px;font-family:'Liberation Sans',sans-serif;color:#eff0f1;transform:scaleX(0.9000);">UART</div>
<div class="t" style="left:1730.17px;top:1430.84px;font-size:18.50px;font-family:'Liberation Sans',sans-serif;color:#eff0f1;transform:scaleX(0.9000);">RX data</div>
<div class="t" style="left:1880.17px;top:1430.84px;font-size:18.50px;font-family:'Liberation Sans',sans-serif;color:#eff0f1;transform:scaleX(0.9000);">RX data</div>
<div class="t" style="left:2029.61px;top:1430.84px;font-size:18.50px;font-family:'Liberation Sans',sans-serif;color:#eff0f1;transform:scaleX(0.9300);">55</div>
<div class="b" style="left:1277px;top:1451px;width:1116px;height:24px;background:#367349;"></div>
<div class="b" style="left:1277px;top:1475px;width:1116px;height:1px;background:#2b2e31;"></div>
<div class="t" style="left:1280.72px;top:1455.84px;font-size:18.50px;font-family:'Liberation Sans',sans-serif;color:#eff0f1;transform:scaleX(0.9550);">663686066</div>
<div class="t" style="left:1429.44px;top:1455.84px;font-size:18.50px;font-family:'Liberation Sans',sans-serif;color:#eff0f1;transform:scaleX(0.9300);">26.547 s</div>
<div class="t" style="left:1579.75px;top:1455.84px;font-size:18.50px;font-family:'Liberation Sans',sans-serif;color:#eff0f1;transform:scaleX(0.9000);">UART</div>
<div class="t" style="left:1730.17px;top:1455.84px;font-size:18.50px;font-family:'Liberation Sans',sans-serif;color:#eff0f1;transform:scaleX(0.9000);">RX data</div>
<div class="t" style="left:1880.17px;top:1455.84px;font-size:18.50px;font-family:'Liberation Sans',sans-serif;color:#eff0f1;transform:scaleX(0.9000);">RX data</div>
<div class="t" style="left:2029.61px;top:1455.84px;font-size:18.50px;font-family:'Liberation Sans',sans-serif;color:#eff0f1;transform:scaleX(0.9300);">00</div>
<div class="b" style="left:1277px;top:1476px;width:1116px;height:24px;background:#367349;"></div>
<div class="b" style="left:1277px;top:1500px;width:1116px;height:1px;background:#2b2e31;"></div>
<div class="t" style="left:1280.72px;top:1480.84px;font-size:18.50px;font-family:'Liberation Sans',sans-serif;color:#eff0f1;transform:scaleX(0.9550);">663688229</div>
<div class="t" style="left:1429.44px;top:1480.84px;font-size:18.50px;font-family:'Liberation Sans',sans-serif;color:#eff0f1;transform:scaleX(0.9300);">26.548 s</div>
<div class="t" style="left:1579.75px;top:1480.84px;font-size:18.50px;font-family:'Liberation Sans',sans-serif;color:#eff0f1;transform:scaleX(0.9000);">UART</div>
<div class="t" style="left:1730.17px;top:1480.84px;font-size:18.50px;font-family:'Liberation Sans',sans-serif;color:#eff0f1;transform:scaleX(0.9000);">RX data</div>
<div class="t" style="left:1880.17px;top:1480.84px;font-size:18.50px;font-family:'Liberation Sans',sans-serif;color:#eff0f1;transform:scaleX(0.9000);">RX data</div>
<div class="t" style="left:2029.61px;top:1480.84px;font-size:18.50px;font-family:'Liberation Sans',sans-serif;color:#eff0f1;transform:scaleX(0.9300);">0F</div>
<div class="b" style="left:1277px;top:1501px;width:1116px;height:24px;background:#367349;"></div>
<div class="b" style="left:1277px;top:1525px;width:1116px;height:1px;background:#2b2e31;"></div>
<div class="t" style="left:1280.72px;top:1505.84px;font-size:18.50px;font-family:'Liberation Sans',sans-serif;color:#eff0f1;transform:scaleX(0.9550);">663690392</div>
<div class="t" style="left:1429.44px;top:1505.84px;font-size:18.50px;font-family:'Liberation Sans',sans-serif;color:#eff0f1;transform:scaleX(0.9300);">26.548 s</div>
<div class="t" style="left:1579.75px;top:1505.84px;font-size:18.50px;font-family:'Liberation Sans',sans-serif;color:#eff0f1;transform:scaleX(0.9000);">UART</div>
<div class="t" style="left:1730.17px;top:1505.84px;font-size:18.50px;font-family:'Liberation Sans',sans-serif;color:#eff0f1;transform:scaleX(0.9000);">RX data</div>
<div class="t" style="left:1880.17px;top:1505.84px;font-size:18.50px;font-family:'Liberation Sans',sans-serif;color:#eff0f1;transform:scaleX(0.9000);">RX data</div>
<div class="t" style="left:2029.61px;top:1505.84px;font-size:18.50px;font-family:'Liberation Sans',sans-serif;color:#eff0f1;transform:scaleX(0.9300);">00</div>
<div class="b" style="left:1277px;top:1526px;width:1116px;height:24px;background:#367349;"></div>
<div class="b" style="left:1277px;top:1550px;width:1116px;height:1px;background:#2b2e31;"></div>
<div class="t" style="left:1280.72px;top:1530.84px;font-size:18.50px;font-family:'Liberation Sans',sans-serif;color:#eff0f1;transform:scaleX(0.9550);">663692555</div>
<div class="t" style="left:1429.44px;top:1530.84px;font-size:18.50px;font-family:'Liberation Sans',sans-serif;color:#eff0f1;transform:scaleX(0.9300);">26.548 s</div>
<div class="t" style="left:1579.75px;top:1530.84px;font-size:18.50px;font-family:'Liberation Sans',sans-serif;color:#eff0f1;transform:scaleX(0.9000);">UART</div>
<div class="t" style="left:1730.17px;top:1530.84px;font-size:18.50px;font-family:'Liberation Sans',sans-serif;color:#eff0f1;transform:scaleX(0.9000);">RX data</div>
<div class="t" style="left:1880.17px;top:1530.84px;font-size:18.50px;font-family:'Liberation Sans',sans-serif;color:#eff0f1;transform:scaleX(0.9000);">RX data</div>
<div class="t" style="left:2029.61px;top:1530.84px;font-size:18.50px;font-family:'Liberation Sans',sans-serif;color:#eff0f1;transform:scaleX(0.9300);">00</div>
<div class="b" style="left:1277px;top:1551px;width:1116px;height:24px;background:#367349;"></div>
<div class="b" style="left:1277px;top:1575px;width:1116px;height:1px;background:#2b2e31;"></div>
<div class="t" style="left:1280.72px;top:1555.84px;font-size:18.50px;font-family:'Liberation Sans',sans-serif;color:#eff0f1;transform:scaleX(0.9550);">663694718</div>
<div class="t" style="left:1429.44px;top:1555.84px;font-size:18.50px;font-family:'Liberation Sans',sans-serif;color:#eff0f1;transform:scaleX(0.9300);">26.548 s</div>
<div class="t" style="left:1579.75px;top:1555.84px;font-size:18.50px;font-family:'Liberation Sans',sans-serif;color:#eff0f1;transform:scaleX(0.9000);">UART</div>
<div class="t" style="left:1730.17px;top:1555.84px;font-size:18.50px;font-family:'Liberation Sans',sans-serif;color:#eff0f1;transform:scaleX(0.9000);">RX data</div>
<div class="t" style="left:1880.17px;top:1555.84px;font-size:18.50px;font-family:'Liberation Sans',sans-serif;color:#eff0f1;transform:scaleX(0.9000);">RX data</div>
<div class="t" style="left:2029.61px;top:1555.84px;font-size:18.50px;font-family:'Liberation Sans',sans-serif;color:#eff0f1;transform:scaleX(0.9300);">00</div>
<div class="b" style="left:1277px;top:1576px;width:1116px;height:24px;background:#367349;"></div>
<div class="b" style="left:1277px;top:1600px;width:1116px;height:1px;background:#2b2e31;"></div>
<div class="t" style="left:1280.72px;top:1580.84px;font-size:18.50px;font-family:'Liberation Sans',sans-serif;color:#eff0f1;transform:scaleX(0.9550);">663696880</div>
<div class="t" style="left:1429.44px;top:1580.84px;font-size:18.50px;font-family:'Liberation Sans',sans-serif;color:#eff0f1;transform:scaleX(0.9300);">26.548 s</div>
<div class="t" style="left:1579.75px;top:1580.84px;font-size:18.50px;font-family:'Liberation Sans',sans-serif;color:#eff0f1;transform:scaleX(0.9000);">UART</div>
<div class="t" style="left:1730.17px;top:1580.84px;font-size:18.50px;font-family:'Liberation Sans',sans-serif;color:#eff0f1;transform:scaleX(0.9000);">RX data</div>
<div class="t" style="left:1880.17px;top:1580.84px;font-size:18.50px;font-family:'Liberation Sans',sans-serif;color:#eff0f1;transform:scaleX(0.9000);">RX data</div>
<div class="t" style="left:2029.53px;top:1580.84px;font-size:18.50px;font-family:'Liberation Sans',sans-serif;color:#eff0f1;transform:scaleX(0.9300);">80</div>
<div class="b" style="left:1277px;top:1601px;width:1116px;height:24px;background:#367349;"></div>
<div class="b" style="left:1277px;top:1625px;width:1116px;height:1px;background:#2b2e31;"></div>
<div class="t" style="left:1280.72px;top:1605.84px;font-size:18.50px;font-family:'Liberation Sans',sans-serif;color:#eff0f1;transform:scaleX(0.9550);">663699043</div>
<div class="t" style="left:1429.44px;top:1605.84px;font-size:18.50px;font-family:'Liberation Sans',sans-serif;color:#eff0f1;transform:scaleX(0.9300);">26.548 s</div>
<div class="t" style="left:1579.75px;top:1605.84px;font-size:18.50px;font-family:'Liberation Sans',sans-serif;color:#eff0f1;transform:scaleX(0.9000);">UART</div>
<div class="t" style="left:1730.17px;top:1605.84px;font-size:18.50px;font-family:'Liberation Sans',sans-serif;color:#eff0f1;transform:scaleX(0.9000);">RX data</div>
<div class="t" style="left:1880.17px;top:1605.84px;font-size:18.50px;font-family:'Liberation Sans',sans-serif;color:#eff0f1;transform:scaleX(0.9000);">RX data</div>
<div class="t" style="left:2029.53px;top:1605.84px;font-size:18.50px;font-family:'Liberation Sans',sans-serif;color:#eff0f1;transform:scaleX(0.9300);">80</div>
<div class="b" style="left:1277px;top:1626px;width:1116px;height:24px;background:#367349;"></div>
<div class="b" style="left:1277px;top:1650px;width:1116px;height:1px;background:#2b2e31;"></div>
<div class="t" style="left:1280.72px;top:1630.84px;font-size:18.50px;font-family:'Liberation Sans',sans-serif;color:#eff0f1;transform:scaleX(0.9550);">663701207</div>
<div class="t" style="left:1429.44px;top:1630.84px;font-size:18.50px;font-family:'Liberation Sans',sans-serif;color:#eff0f1;transform:scaleX(0.9300);">26.548 s</div>
<div class="t" style="left:1579.75px;top:1630.84px;font-size:18.50px;font-family:'Liberation Sans',sans-serif;color:#eff0f1;transform:scaleX(0.9000);">UART</div>
<div class="t" style="left:1730.17px;top:1630.84px;font-size:18.50px;font-family:'Liberation Sans',sans-serif;color:#eff0f1;transform:scaleX(0.9000);">RX data</div>
<div class="t" style="left:1880.17px;top:1630.84px;font-size:18.50px;font-family:'Liberation Sans',sans-serif;color:#eff0f1;transform:scaleX(0.9000);">RX data</div>
<div class="t" style="left:2029.53px;top:1630.84px;font-size:18.50px;font-family:'Liberation Sans',sans-serif;color:#eff0f1;transform:scaleX(0.9300);">8F</div>
<div class="b" style="left:1426px;top:226px;width:1px;height:1425px;background:#2b2e31;"></div>
<div class="b" style="left:1576px;top:226px;width:1px;height:1425px;background:#2b2e31;"></div>
<div class="b" style="left:1726px;top:226px;width:1px;height:1425px;background:#2b2e31;"></div>
<div class="b" style="left:1876px;top:226px;width:1px;height:1425px;background:#2b2e31;"></div>
<div class="b" style="left:2026px;top:226px;width:1px;height:1425px;background:#2b2e31;"></div>
<div class="b" style="left:2411.6px;top:125px;width:2px;height:52px;background:#55595d;"></div>
<div class="b" style="left:2417.6px;top:125px;width:2px;height:52px;background:#55595d;"></div>
<div class="t" style="left:2422.02px;top:143.66px;font-size:18.00px;font-family:'Liberation Sans',sans-serif;color:#eff0f1;transform:scaleX(0.8923);">Decoder:</div>
<div class="b" style="left:2488px;top:135px;width:102px;height:31px;border:1px solid #6a6d70;border-radius:3px"></div>
<div class="t" style="left:2492.80px;top:143.66px;font-size:18.00px;font-family:'Liberation Sans',sans-serif;color:#eff0f1;transform:scaleX(0.8855);">UART</div>
<svg class="b" style="left:2579.5px;top:149.0px;" width="8" height="5" viewBox="0 0 8 5"><path d="M0 0 L8 0 L4.0 5 Z" fill="#a9abad"/></svg>
<div class="b" style="left:2593px;top:135px;width:117px;height:31px;border:1px solid #6a6d70;border-radius:3px"></div>
<div class="t" style="left:2599.98px;top:143.66px;font-size:18.00px;font-family:'Liberation Sans',sans-serif;color:#eff0f1;transform:scaleX(0.8858);">TX dump</div>
<svg class="b" style="left:2698.0px;top:149.0px;" width="8" height="5" viewBox="0 0 8 5"><path d="M0 0 L8 0 L4.0 5 Z" fill="#a9abad"/></svg>
<div class="b" style="left:2714px;top:135px;width:2px;height:33px;background:#5d6165;"></div>
<div class="t" style="left:2719.30px;top:143.66px;font-size:18.00px;font-family:'Liberation Sans',sans-serif;color:#eff0f1;transform:scaleX(0.8668);">Show data as</div>
<div class="b" style="left:2815px;top:135px;width:103px;height:31px;border:1px solid #6a6d70;border-radius:3px"></div>
<div class="t" style="left:2819.70px;top:143.66px;font-size:18.00px;font-family:'Liberation Sans',sans-serif;color:#eff0f1;transform:scaleX(0.9054);">Hexdump</div>
<svg class="b" style="left:2906.5px;top:149.0px;" width="8" height="5" viewBox="0 0 8 5"><path d="M0 0 L8 0 L4.0 5 Z" fill="#a9abad"/></svg>
<div class="b" style="left:2922px;top:135px;width:2px;height:33px;background:#5d6165;"></div>
<svg class="b" style="left:2939.7px;top:134.5px;" width="30" height="30" viewBox="0 0 30 30"><path d="M7 10.7 H23.5 L25.5 19 H4.5 Z" fill="#f0f0f0" stroke="#d8d8d8" stroke-width="0.6"/><rect x="4.5" y="19" width="21" height="7.5" rx="0.8" fill="#f6f6f6"/><rect x="6.5" y="19.6" width="17" height="5" fill="#fff" stroke="#62665c" stroke-width="0.9"/><rect x="8" y="21" width="9.5" height="1.8" fill="#c4c4c4"/><rect x="19.1" y="20" width="1" height="4.2" fill="#111"/><path d="M5 10.5 Q7.5 4.5 13 6 Q17.8 7.5 17.8 13.5 H21 L15.5 19.5 L10 13.5 H12.6 Q12.6 9.8 9.8 9.6 Q7.3 9.5 5 10.5 Z" fill="#5a9ed6" stroke="#2a64a4" stroke-width="0.7"/></svg>
<svg class="b" style="left:2983.0px;top:149.0px;" width="8" height="5" viewBox="0 0 8 5"><path d="M0 0 L8 0 L4.0 5 Z" fill="#d4d5d6"/></svg>
<div class="b" style="left:2404px;top:182px;width:737px;height:1549px;background:#7b7e81;"></div>
<div class="b" style="left:2405px;top:184px;width:733px;height:1547px;background:#000000;"></div>
<div class="b" style="left:2959px;top:184px;width:1.2px;height:1547px;background:#e8e8e8;"></div>
<div class="t" style="left:2449.40px;top:188.05px;font-size:18.33px;font-family:'Liberation Mono',monospace;color:#f4f4f4">0</div>
<div class="t" style="left:2482.40px;top:188.05px;font-size:18.33px;font-family:'Liberation Mono',monospace;color:#f4f4f4">1</div>
<div class="t" style="left:2515.40px;top:188.05px;font-size:18.33px;font-family:'Liberation Mono',monospace;color:#f4f4f4">2</div>
<div class="t" style="left:2548.40px;top:188.05px;font-size:18.33px;font-family:'Liberation Mono',monospace;color:#f4f4f4">3</div>
<div class="t" style="left:2581.40px;top:188.05px;font-size:18.33px;font-family:'Liberation Mono',monospace;color:#f4f4f4">4</div>
<div class="t" style="left:2614.40px;top:188.05px;font-size:18.33px;font-family:'Liberation Mono',monospace;color:#f4f4f4">5</div>
<div class="t" style="left:2647.40px;top:188.05px;font-size:18.33px;font-family:'Liberation Mono',monospace;color:#f4f4f4">6</div>
<div class="t" style="left:2680.40px;top:188.05px;font-size:18.33px;font-family:'Liberation Mono',monospace;color:#f4f4f4">7</div>
<div class="t" style="left:2713.40px;top:188.05px;font-size:18.33px;font-family:'Liberation Mono',monospace;color:#f4f4f4">8</div>
<div class="t" style="left:2746.40px;top:188.05px;font-size:18.33px;font-family:'Liberation Mono',monospace;color:#f4f4f4">9</div>
<div class="t" style="left:2779.40px;top:188.05px;font-size:18.33px;font-family:'Liberation Mono',monospace;color:#f4f4f4">A</div>
<div class="t" style="left:2812.40px;top:188.05px;font-size:18.33px;font-family:'Liberation Mono',monospace;color:#f4f4f4">B</div>
<div class="t" style="left:2845.40px;top:188.05px;font-size:18.33px;font-family:'Liberation Mono',monospace;color:#f4f4f4">C</div>
<div class="t" style="left:2878.40px;top:188.05px;font-size:18.33px;font-family:'Liberation Mono',monospace;color:#f4f4f4">D</div>
<div class="t" style="left:2911.40px;top:188.05px;font-size:18.33px;font-family:'Liberation Mono',monospace;color:#f4f4f4">E</div>
<div class="t" style="left:2944.40px;top:188.05px;font-size:18.33px;font-family:'Liberation Mono',monospace;color:#f4f4f4">F</div>
<div class="b" style="left:2437px;top:210px;width:298px;height:22px;background:#fdf4ee;"></div>
<div class="b" style="left:2964px;top:210px;width:99px;height:22px;background:#fdf4ee;"></div>
<div class="t" style="left:2405.40px;top:212.55px;font-size:18.33px;font-family:'Liberation Mono',monospace;color:#f4f4f4">00</div>
<div class="t" style="left:2405.40px;top:235.25px;font-size:18.33px;font-family:'Liberation Mono',monospace;color:#f4f4f4">10</div>
<div class="t" style="left:2438.40px;top:212.55px;font-size:18.33px;font-family:'Liberation Mono',monospace;color:#2a9a2a">AA</div>
<div class="t" style="left:2471.40px;top:212.55px;font-size:18.33px;font-family:'Liberation Mono',monospace;color:#c0703c">55</div>
<div class="t" style="left:2504.40px;top:212.55px;font-size:18.33px;font-family:'Liberation Mono',monospace;color:#2020b0">00</div>
<div class="t" style="left:2537.40px;top:212.55px;font-size:18.33px;font-family:'Liberation Mono',monospace;color:#2a9a2a">77</div>
<div class="t" style="left:2570.40px;top:212.55px;font-size:18.33px;font-family:'Liberation Mono',monospace;color:#c0703c">00</div>
<div class="t" style="left:2603.40px;top:212.55px;font-size:18.33px;font-family:'Liberation Mono',monospace;color:#2020b0">00</div>
<div class="t" style="left:2636.40px;top:212.55px;font-size:18.33px;font-family:'Liberation Mono',monospace;color:#2a9a2a">00</div>
<div class="t" style="left:2669.40px;top:212.55px;font-size:18.33px;font-family:'Liberation Mono',monospace;color:#c0703c">00</div>
<div class="t" style="left:2702.40px;top:212.55px;font-size:18.33px;font-family:'Liberation Mono',monospace;font-weight:700;color:#10108c">B7</div>
<div class="t" style="left:2735.40px;top:212.55px;font-size:18.33px;font-family:'Liberation Mono',monospace;color:#1e8a1e">AA</div>
<div class="t" style="left:2768.40px;top:212.55px;font-size:18.33px;font-family:'Liberation Mono',monospace;color:#9a4a1a">55</div>
<div class="t" style="left:2801.40px;top:212.55px;font-size:18.33px;font-family:'Liberation Mono',monospace;color:#000088">00</div>
<div class="t" style="left:2834.40px;top:212.55px;font-size:18.33px;font-family:'Liberation Mono',monospace;color:#1e8a1e">F7</div>
<div class="t" style="left:2867.40px;top:212.55px;font-size:18.33px;font-family:'Liberation Mono',monospace;color:#9a4a1a">00</div>
<div class="t" style="left:2900.40px;top:212.55px;font-size:18.33px;font-family:'Liberation Mono',monospace;color:#000088">00</div>
<div class="t" style="left:2933.40px;top:212.55px;font-size:18.33px;font-family:'Liberation Mono',monospace;color:#1e8a1e">00</div>
<div class="t" style="left:2438.40px;top:235.25px;font-size:18.33px;font-family:'Liberation Mono',monospace;color:#9a4a1a">00</div>
<div class="t" style="left:2471.40px;top:235.25px;font-size:18.33px;font-family:'Liberation Mono',monospace;color:#000088">77</div>
<div class="t" style="left:2504.40px;top:235.25px;font-size:18.33px;font-family:'Liberation Mono',monospace;color:#1e8a1e">AA</div>
<div class="t" style="left:2537.40px;top:235.25px;font-size:18.33px;font-family:'Liberation Mono',monospace;color:#9a4a1a">55</div>
<div class="t" style="left:2570.40px;top:235.25px;font-size:18.33px;font-family:'Liberation Mono',monospace;color:#000088">00</div>
<div class="t" style="left:2603.40px;top:235.25px;font-size:18.33px;font-family:'Liberation Mono',monospace;color:#1e8a1e">0F</div>
<div class="t" style="left:2636.40px;top:235.25px;font-size:18.33px;font-family:'Liberation Mono',monospace;color:#9a4a1a">00</div>
<div class="t" style="left:2669.40px;top:235.25px;font-size:18.33px;font-family:'Liberation Mono',monospace;color:#000088">00</div>
<div class="t" style="left:2702.40px;top:235.25px;font-size:18.33px;font-family:'Liberation Mono',monospace;color:#1e8a1e">00</div>
<div class="t" style="left:2735.40px;top:235.25px;font-size:18.33px;font-family:'Liberation Mono',monospace;color:#9a4a1a">00</div>
<div class="t" style="left:2768.40px;top:235.25px;font-size:18.33px;font-family:'Liberation Mono',monospace;color:#000088">F7</div>
<div class="t" style="left:2964.00px;top:212.55px;font-size:18.33px;font-family:'Liberation Mono',monospace;color:#e8ecf0">.U.w.....</div>
<div class="t" style="left:3063.00px;top:212.55px;font-size:18.33px;font-family:'Liberation Mono',monospace;color:#f4f4f4">.U.....</div>
<div class="t" style="left:2964.00px;top:235.25px;font-size:18.33px;font-family:'Liberation Mono',monospace;color:#f4f4f4">.w.U.......</div>
</body></html>
